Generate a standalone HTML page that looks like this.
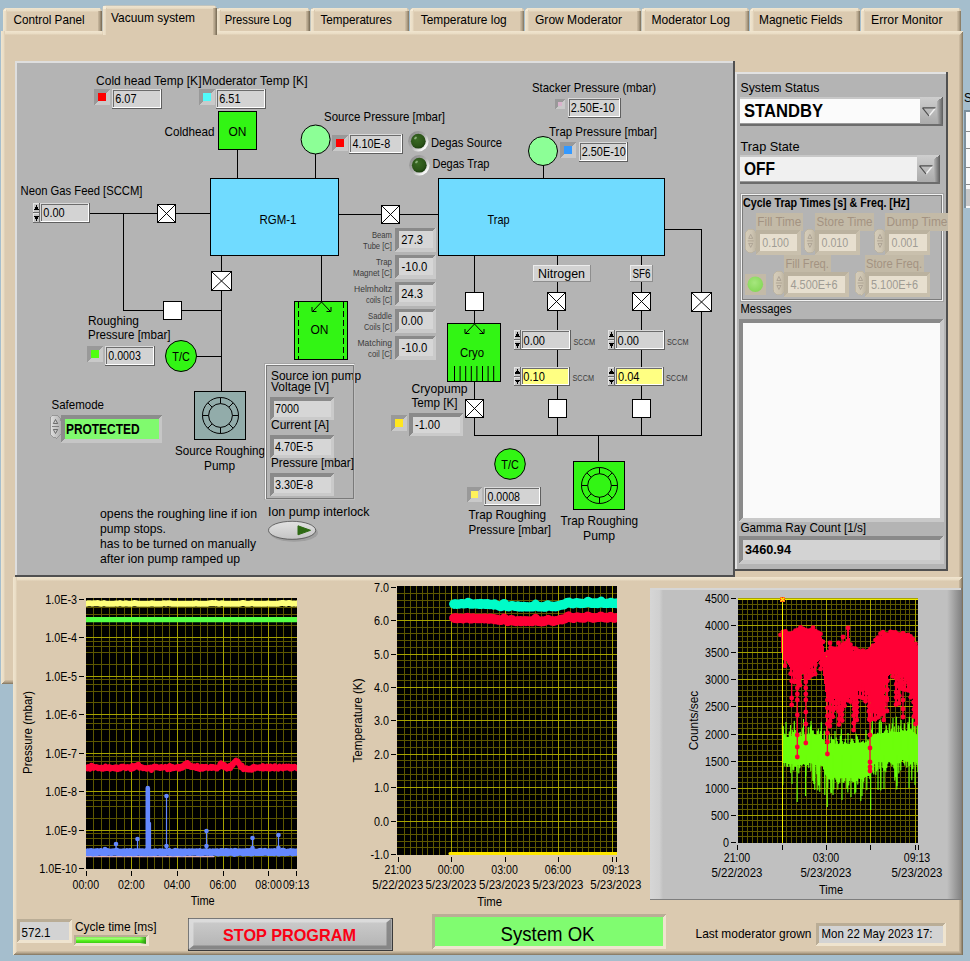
<!DOCTYPE html>
<html lang="en"><head><meta charset="utf-8"><title>Vacuum system</title>
<style>
html,body{margin:0;padding:0;background:#a5becd;}
body{width:970px;height:961px;overflow:hidden;}
#panel{position:absolute;left:0;top:0;width:970px;height:961px;display:block;font-family:"Liberation Sans",sans-serif;font-size:13px;}
#panel rect,#panel polygon{shape-rendering:crispEdges;}
</style></head><body>
<svg id="panel" width="970" height="961" viewBox="0 0 970 961">
<defs>
<linearGradient id="hlT" x1="0" y1="0" x2="0" y2="1"><stop offset="0" stop-color="#f0e5cf"/><stop offset=".7" stop-color="#e9dcc4"/><stop offset="1" stop-color="#dbcab0"/></linearGradient>
<linearGradient id="hlL" x1="0" y1="0" x2="1" y2="0"><stop offset="0" stop-color="#f0e5cf"/><stop offset=".7" stop-color="#e9dcc4"/><stop offset="1" stop-color="#dbcab0"/></linearGradient>
<linearGradient id="shR" x1="0" y1="0" x2="1" y2="0"><stop offset="0" stop-color="#d2c1a7"/><stop offset=".5" stop-color="#b3a38a"/><stop offset="1" stop-color="#80735d"/></linearGradient>
<linearGradient id="shB" x1="0" y1="0" x2="0" y2="1"><stop offset="0" stop-color="#d2c1a7"/><stop offset=".5" stop-color="#b3a38a"/><stop offset="1" stop-color="#80735d"/></linearGradient>
<linearGradient id="bez" x1="0" y1="0" x2="1" y2="1"><stop offset="0.1" stop-color="#8c8c8c"/><stop offset=".5" stop-color="#b0b0b0"/><stop offset=".85" stop-color="#ffffff"/></linearGradient>
<radialGradient id="dkg" cx=".42" cy=".38" r=".65"><stop offset="0" stop-color="#3a6a24"/><stop offset=".7" stop-color="#2c5519"/><stop offset="1" stop-color="#1a3a0e"/></radialGradient>
<radialGradient id="dled" cx=".45" cy=".4" r=".6"><stop offset="0" stop-color="#a6e67e"/><stop offset="1" stop-color="#86d858"/></radialGradient>
<linearGradient id="dspin" x1="0" y1="0" x2="1" y2="0"><stop offset="0" stop-color="#d6cdba"/><stop offset=".6" stop-color="#cec5b2"/><stop offset="1" stop-color="#bdb4a1"/></linearGradient>
<linearGradient id="ovl" x1="0" y1="0" x2="1" y2="0"><stop offset="0" stop-color="#e2e2e2"/><stop offset="1" stop-color="#b0b0b0"/></linearGradient>
<linearGradient id="tog" x1="0" y1="0" x2="0" y2="1"><stop offset="0" stop-color="#e2e2e2"/><stop offset="1" stop-color="#c4c4c4"/></linearGradient>
<linearGradient id="btn" x1="0" y1="0" x2="0" y2="1"><stop offset="0" stop-color="#cfcfcf"/><stop offset="1" stop-color="#ababab"/></linearGradient>
<linearGradient id="btnr" x1="0" y1="0" x2="1" y2="0"><stop offset="0" stop-color="#b4b4b4"/><stop offset="1" stop-color="#5c5c5c"/></linearGradient>
<linearGradient id="stopb" x1="0" y1="0" x2="0" y2="1"><stop offset="0" stop-color="#cdcdcd"/><stop offset="1" stop-color="#b2b2b2"/></linearGradient>
<linearGradient id="prog" x1="0" y1="0" x2="0" y2="1"><stop offset="0" stop-color="#7af04a"/><stop offset=".3" stop-color="#a4ff7c"/><stop offset=".6" stop-color="#56f01a"/><stop offset="1" stop-color="#3ccc14"/></linearGradient>
<linearGradient id="proge" x1="0" y1="0" x2="1" y2="0"><stop offset="0" stop-color="#2fa010" stop-opacity="0"/><stop offset="1" stop-color="#2a9010" stop-opacity=".9"/></linearGradient>
<linearGradient id="c3f" x1="0" y1="0" x2="1" y2="0"><stop offset="0" stop-color="#d6d6d6"/><stop offset=".03" stop-color="#d0d0d0"/><stop offset=".042" stop-color="#c0c0c0"/><stop offset=".955" stop-color="#c0c0c0"/><stop offset="1" stop-color="#848484"/></linearGradient>
<clipPath id="c1"><rect x="86" y="598" width="211" height="271"/></clipPath>
<clipPath id="c2"><rect x="397" y="586" width="220" height="269"/></clipPath>
<clipPath id="c3"><rect x="738" y="598" width="180" height="245"/></clipPath>
</defs>
<rect x="0" y="0" width="970" height="961" fill="#a5becd"/>
<path d="M3 32V11Q3 8 6 8H98.5Q101.5 8 101.5 11V32Z" fill="#dbcab0"/>
<rect x="5" y="8" width="94.5" height="4" fill="url(#hlT)"/>
<rect x="3" y="10" width="4" height="22" fill="url(#hlL)"/>
<rect x="97.5" y="10.5" width="4" height="21.5" fill="url(#shR)"/>
<rect x="3.5" y="8.5" width="3" height="3" fill="#f6ecd8" rx="1.5"/>
<text x="13.6" y="24" textLength="71" lengthAdjust="spacingAndGlyphs">Control Panel</text>
<path d="M216.5 32V11Q216.5 8 219.5 8H306.5Q309.5 8 309.5 11V32Z" fill="#dbcab0"/>
<rect x="218.5" y="8" width="89" height="4" fill="url(#hlT)"/>
<rect x="216.5" y="10" width="4" height="22" fill="url(#hlL)"/>
<rect x="305.5" y="10.5" width="4" height="21.5" fill="url(#shR)"/>
<rect x="217" y="8.5" width="3" height="3" fill="#f6ecd8" rx="1.5"/>
<text x="224.8" y="24" textLength="66.8" lengthAdjust="spacingAndGlyphs">Pressure Log</text>
<path d="M310.5 32V11Q310.5 8 313.5 8H406Q409 8 409 11V32Z" fill="#dbcab0"/>
<rect x="312.5" y="8" width="94.5" height="4" fill="url(#hlT)"/>
<rect x="310.5" y="10" width="4" height="22" fill="url(#hlL)"/>
<rect x="405" y="10.5" width="4" height="21.5" fill="url(#shR)"/>
<rect x="311" y="8.5" width="3" height="3" fill="#f6ecd8" rx="1.5"/>
<text x="320.5" y="24" textLength="71.3" lengthAdjust="spacingAndGlyphs">Temperatures</text>
<path d="M410 32V11Q410 8 413 8H521Q524 8 524 11V32Z" fill="#dbcab0"/>
<rect x="412" y="8" width="110" height="4" fill="url(#hlT)"/>
<rect x="410" y="10" width="4" height="22" fill="url(#hlL)"/>
<rect x="520" y="10.5" width="4" height="21.5" fill="url(#shR)"/>
<rect x="410.5" y="8.5" width="3" height="3" fill="#f6ecd8" rx="1.5"/>
<text x="420.7" y="24" textLength="86" lengthAdjust="spacingAndGlyphs">Temperature log</text>
<path d="M525 32V11Q525 8 528 8H637.8Q640.8 8 640.8 11V32Z" fill="#dbcab0"/>
<rect x="527" y="8" width="111.8" height="4" fill="url(#hlT)"/>
<rect x="525" y="10" width="4" height="22" fill="url(#hlL)"/>
<rect x="636.8" y="10.5" width="4" height="21.5" fill="url(#shR)"/>
<rect x="525.5" y="8.5" width="3" height="3" fill="#f6ecd8" rx="1.5"/>
<text x="535" y="24" textLength="87" lengthAdjust="spacingAndGlyphs">Grow Moderator</text>
<path d="M641.5 32V11Q641.5 8 644.5 8H746Q749 8 749 11V32Z" fill="#dbcab0"/>
<rect x="643.5" y="8" width="103.5" height="4" fill="url(#hlT)"/>
<rect x="641.5" y="10" width="4" height="22" fill="url(#hlL)"/>
<rect x="745" y="10.5" width="4" height="21.5" fill="url(#shR)"/>
<rect x="642" y="8.5" width="3" height="3" fill="#f6ecd8" rx="1.5"/>
<text x="651.5" y="24" textLength="78.5" lengthAdjust="spacingAndGlyphs">Moderator Log</text>
<path d="M750 32V11Q750 8 753 8H857Q860 8 860 11V32Z" fill="#dbcab0"/>
<rect x="752" y="8" width="106" height="4" fill="url(#hlT)"/>
<rect x="750" y="10" width="4" height="22" fill="url(#hlL)"/>
<rect x="856" y="10.5" width="4" height="21.5" fill="url(#shR)"/>
<rect x="750.5" y="8.5" width="3" height="3" fill="#f6ecd8" rx="1.5"/>
<text x="759" y="24" textLength="83.5" lengthAdjust="spacingAndGlyphs">Magnetic Fields</text>
<path d="M861 32V11Q861 8 864 8H958Q961 8 961 11V32Z" fill="#dbcab0"/>
<rect x="863" y="8" width="96" height="4" fill="url(#hlT)"/>
<rect x="861" y="10" width="4" height="22" fill="url(#hlL)"/>
<rect x="957" y="10.5" width="4" height="21.5" fill="url(#shR)"/>
<rect x="861.5" y="8.5" width="3" height="3" fill="#f6ecd8" rx="1.5"/>
<text x="871" y="24" textLength="71.5" lengthAdjust="spacingAndGlyphs">Error Monitor</text>
<rect x="1" y="31" width="962" height="653" fill="#dbcab0"/>
<rect x="1" y="31" width="962" height="4" fill="url(#hlT)"/>
<rect x="1" y="31" width="4" height="653" fill="url(#hlL)"/>
<polygon points="959,35 963,31 963,684 959,680" fill="url(#shR)"/>
<polygon points="5,680 959,680 963,684 1,684" fill="url(#shB)"/>
<path d="M102.5 35V8.5Q102.5 5.5 105.5 5.5H213.5Q216.5 5.5 216.5 8.5V35Z" fill="#dbcab0"/>
<rect x="104.5" y="5.5" width="110" height="4" fill="url(#hlT)"/>
<rect x="102.5" y="7.5" width="4" height="27.5" fill="url(#hlL)"/>
<rect x="212.5" y="8" width="4" height="27" fill="url(#shR)"/>
<rect x="103" y="6" width="3" height="3" fill="#f6ecd8" rx="1.5"/>
<text x="111" y="22" textLength="84" lengthAdjust="spacingAndGlyphs">Vacuum system</text>
<rect x="106.5" y="31" width="106" height="4.5" fill="#dbcab0"/>
<rect x="13" y="577" width="949.5" height="378" fill="#dbcab0"/>
<rect x="13" y="577" width="949.5" height="4" fill="url(#hlT)"/>
<rect x="13" y="577" width="4" height="378" fill="url(#hlL)"/>
<polygon points="958.5,581 962.5,577 962.5,955 958.5,951" fill="url(#shR)"/>
<polygon points="17,951 958.5,951 962.5,955 13,955" fill="url(#shB)"/>
<rect x="15" y="61" width="720" height="516" fill="#505050"/>
<rect x="15" y="61" width="718" height="514" fill="#dedede"/>
<rect x="17" y="63" width="716" height="512" fill="#b4b4b4"/>
<rect x="735" y="72" width="213" height="499" fill="#505050"/>
<rect x="735" y="72" width="211" height="497" fill="#e2e2e2"/>
<rect x="737" y="74" width="209" height="495" fill="#b4b4b4"/>
<text x="964" y="102" textLength="8" lengthAdjust="spacingAndGlyphs">S</text>
<rect x="964" y="110" width="6" height="98" fill="#7d909c"/>
<rect x="966" y="112" width="4" height="96" fill="#fafafa"/>
<rect x="966" y="131" width="4" height="1" fill="#8a8a8a"/>
<rect x="966" y="148" width="4" height="1" fill="#8a8a8a"/>
<rect x="966" y="167" width="4" height="1" fill="#8a8a8a"/>
<rect x="966" y="184" width="4" height="1" fill="#8a8a8a"/>
<rect x="966" y="189" width="4" height="17" fill="#c8c8c8"/>
<rect x="90" y="213" width="67" height="1" fill="#000"/>
<rect x="176" y="213" width="34" height="1" fill="#000"/>
<rect x="123" y="213" width="1" height="98" fill="#000"/>
<rect x="123" y="310" width="40" height="1" fill="#000"/>
<rect x="182" y="310" width="40" height="1" fill="#000"/>
<rect x="237" y="150" width="1" height="28" fill="#000"/>
<rect x="315" y="154" width="1" height="24" fill="#000"/>
<rect x="339" y="214" width="42" height="1" fill="#000"/>
<rect x="400" y="214" width="38" height="1" fill="#000"/>
<rect x="221" y="256" width="1" height="15" fill="#000"/>
<rect x="221" y="290" width="1" height="101" fill="#000"/>
<rect x="196" y="356" width="26" height="1" fill="#000"/>
<rect x="321" y="256" width="1" height="45" fill="#000"/>
<rect x="543" y="165" width="1" height="13" fill="#000"/>
<rect x="474" y="256" width="1" height="36" fill="#000"/>
<rect x="474" y="311" width="1" height="12" fill="#000"/>
<rect x="474" y="382" width="1" height="17" fill="#000"/>
<rect x="474" y="418" width="1" height="18" fill="#000"/>
<rect x="474" y="435" width="228" height="1" fill="#000"/>
<rect x="557" y="256" width="1" height="180" fill="#000"/>
<rect x="641" y="256" width="1" height="180" fill="#000"/>
<rect x="665" y="229" width="37" height="1" fill="#000"/>
<rect x="701" y="229" width="1" height="207" fill="#000"/>
<rect x="598" y="435" width="1" height="26" fill="#000"/>
<text x="96" y="85" textLength="105.5" lengthAdjust="spacingAndGlyphs">Cold head Temp [K]</text>
<polygon points="94,89 110,89 106,93 98,93 98,101 94,105" fill="#999999"/>
<polygon points="110,105 94,105 98,101 106,101 106,93 110,89" fill="#c9c9c9"/>
<rect x="98" y="93" width="8" height="8" fill="#ff0000"/>
<rect x="112" y="89" width="50" height="20" fill="#5f5f5f"/>
<rect x="112" y="89" width="49" height="19" fill="#dadada"/>
<rect x="113" y="90" width="48" height="18" fill="#ffffff"/>
<rect x="113" y="90" width="47" height="17" fill="#6c6c6c"/>
<rect x="114" y="91" width="46" height="16" fill="#d3d3d3"/>
<text x="115.2" y="103" textLength="21.3" lengthAdjust="spacingAndGlyphs">6.07</text>
<text x="202" y="85" textLength="105.5" lengthAdjust="spacingAndGlyphs">Moderator Temp [K]</text>
<polygon points="199,89 215,89 211,93 203,93 203,101 199,105" fill="#999999"/>
<polygon points="215,105 199,105 203,101 211,101 211,93 215,89" fill="#c9c9c9"/>
<rect x="203" y="93" width="8" height="8" fill="#50fafa"/>
<rect x="216" y="89" width="50" height="20" fill="#5f5f5f"/>
<rect x="216" y="89" width="49" height="19" fill="#dadada"/>
<rect x="217" y="90" width="48" height="18" fill="#ffffff"/>
<rect x="217" y="90" width="47" height="17" fill="#6c6c6c"/>
<rect x="218" y="91" width="46" height="16" fill="#d3d3d3"/>
<text x="219.2" y="103" textLength="21.3" lengthAdjust="spacingAndGlyphs">6.51</text>
<text x="164.5" y="136" textLength="50" lengthAdjust="spacingAndGlyphs">Coldhead</text>
<rect x="218" y="111" width="39" height="39" fill="#000"/>
<rect x="219" y="112" width="37" height="37" fill="#32f514"/>
<text x="237.5" y="136" textLength="18" lengthAdjust="spacingAndGlyphs" text-anchor="middle">ON</text>
<rect x="210" y="178" width="129" height="78" fill="#000"/>
<rect x="211" y="179" width="127" height="76" fill="#70dbff"/>
<text x="278" y="224" textLength="37" lengthAdjust="spacingAndGlyphs" text-anchor="middle">RGM-1</text>
<circle cx="315.6" cy="139.5" r="14.5" fill="#8cff96" stroke="#000"/>
<text x="324" y="121" textLength="121" lengthAdjust="spacingAndGlyphs">Source Pressure [mbar]</text>
<polygon points="332,135 348,135 344,139 336,139 336,147 332,151" fill="#999999"/>
<polygon points="348,151 332,151 336,147 344,147 344,139 348,135" fill="#c9c9c9"/>
<rect x="336" y="139" width="8" height="8" fill="#ff0000"/>
<rect x="349" y="134" width="54" height="20" fill="#5f5f5f"/>
<rect x="349" y="134" width="53" height="19" fill="#dadada"/>
<rect x="350" y="135" width="52" height="18" fill="#ffffff"/>
<rect x="350" y="135" width="51" height="17" fill="#6c6c6c"/>
<rect x="351" y="136" width="50" height="16" fill="#d3d3d3"/>
<text x="352.5" y="148" textLength="37.7" lengthAdjust="spacingAndGlyphs">4.10E-8</text>
<circle cx="418.3" cy="141.2" r="10.2" fill="url(#bez)"/>
<circle cx="418.3" cy="141.2" r="7.4" fill="url(#dkg)"/>
<ellipse cx="415.5" cy="138" rx="1.6" ry="1.1" fill="#9cc08c" opacity=".8" transform="rotate(-40 415.5 138)"/>
<circle cx="419.3" cy="165.2" r="10.2" fill="url(#bez)"/>
<circle cx="419.3" cy="165.2" r="7.4" fill="url(#dkg)"/>
<ellipse cx="416.5" cy="162" rx="1.6" ry="1.1" fill="#9cc08c" opacity=".8" transform="rotate(-40 416.5 162)"/>
<text x="431" y="147" textLength="71" lengthAdjust="spacingAndGlyphs">Degas Source</text>
<text x="432.5" y="168" textLength="57" lengthAdjust="spacingAndGlyphs">Degas Trap</text>
<text x="20.5" y="195" textLength="122" lengthAdjust="spacingAndGlyphs">Neon Gas Feed [SCCM]</text>
<rect x="33" y="203" width="7" height="10" fill="#6a6a6a"/>
<rect x="33" y="203" width="6" height="9" fill="#e4e4e4"/>
<rect x="34" y="204" width="5" height="8" fill="#c4c4c4"/>
<rect x="33" y="213" width="7" height="10" fill="#6a6a6a"/>
<rect x="33" y="213" width="6" height="9" fill="#e4e4e4"/>
<rect x="34" y="214" width="5" height="8" fill="#c4c4c4"/>
<polygon points="36.5,205 39.1,210 33.9,210" fill="#000"/>
<polygon points="36.5,221 39.1,216 33.9,216" fill="#000"/>
<rect x="40" y="203" width="50" height="20" fill="#5f5f5f"/>
<rect x="40" y="203" width="49" height="19" fill="#dadada"/>
<rect x="41" y="204" width="48" height="18" fill="#ffffff"/>
<rect x="41" y="204" width="47" height="17" fill="#6c6c6c"/>
<rect x="42" y="205" width="46" height="16" fill="#d3d3d3"/>
<text x="43.3" y="217" textLength="21.3" lengthAdjust="spacingAndGlyphs">0.00</text>
<rect x="157" y="204" width="19" height="19" fill="#000"/>
<rect x="158" y="205" width="17" height="17" fill="#fff"/>
<path d="M158 205L175 222M175 205L158 222" stroke="#000" stroke-width="0.95" fill="none"/>
<rect x="381" y="205" width="19" height="19" fill="#000"/>
<rect x="382" y="206" width="17" height="17" fill="#fff"/>
<path d="M382 206L399 223M399 206L382 223" stroke="#000" stroke-width="0.95" fill="none"/>
<rect x="211" y="271" width="21" height="20" fill="#000"/>
<rect x="212" y="272" width="19" height="18" fill="#fff"/>
<path d="M212 272L231 290M231 272L212 290" stroke="#000" stroke-width="0.95" fill="none"/>
<rect x="163" y="301" width="19" height="19" fill="#000"/>
<rect x="164" y="302" width="17" height="17" fill="#fff"/>
<text x="88" y="324.5" textLength="51" lengthAdjust="spacingAndGlyphs">Roughing</text>
<text x="88" y="339" textLength="82.5" lengthAdjust="spacingAndGlyphs">Pressure [mbar]</text>
<polygon points="87,346 103,346 99,350 91,350 91,358 87,362" fill="#999999"/>
<polygon points="103,362 87,362 91,358 99,358 99,350 103,346" fill="#c9c9c9"/>
<rect x="91" y="350" width="8" height="8" fill="#50ff10"/>
<rect x="105" y="346" width="50" height="20" fill="#5f5f5f"/>
<rect x="105" y="346" width="49" height="19" fill="#dadada"/>
<rect x="106" y="347" width="48" height="18" fill="#ffffff"/>
<rect x="106" y="347" width="47" height="17" fill="#6c6c6c"/>
<rect x="107" y="348" width="46" height="16" fill="#d3d3d3"/>
<text x="108.3" y="360" textLength="32.5" lengthAdjust="spacingAndGlyphs">0.0003</text>
<circle cx="181" cy="356" r="15.5" fill="#32f514" stroke="#000"/>
<text x="181" y="360.8" textLength="17.5" lengthAdjust="spacingAndGlyphs" text-anchor="middle">T/C</text>
<rect x="194" y="391" width="52" height="49" fill="#000"/>
<rect x="195" y="392" width="50" height="47" fill="#92acaa"/>
<g stroke="#000" stroke-width="1" fill="none">
<circle cx="220.5" cy="415.5" r="18"/><circle cx="220.5" cy="415.5" r="11.9"/>
<path d="M232.4 415.5L238.5 415.5M228.91 423.91L233.23 428.23M220.5 427.4L220.5 433.5M212.09 423.91L207.77 428.23M208.6 415.5L202.5 415.5M212.09 407.09L207.77 402.77M220.5 403.6L220.5 397.5M228.91 407.09L233.23 402.77"/>
</g>
<text x="175" y="455" textLength="90" lengthAdjust="spacingAndGlyphs">Source Roughing</text>
<text x="204" y="469.5" textLength="31" lengthAdjust="spacingAndGlyphs">Pump</text>
<text x="51.5" y="408.5" textLength="52.5" lengthAdjust="spacingAndGlyphs">Safemode</text>
<rect x="50" y="415" width="11" height="23" rx="5.5" fill="url(#ovl)" stroke="#8a8a8a" stroke-width="0.8"/>
<path d="M52 426.5h7" stroke="#808080" stroke-width="1"/>
<path d="M53.3 423.5l2.2-4 2.2 4zM53.3 429.5l2.2 4 2.2-4z" fill="none" stroke="#555" stroke-width="0.8"/>
<polygon points="61,415 162,415 158.5,418.5 64.5,418.5 64.5,439 61,442.5" fill="#8c8c8c"/>
<polygon points="162,442.5 61,442.5 64.5,439 158.5,439 158.5,418.5 162,415" fill="#c6c6c6"/>
<rect x="64.5" y="418.5" width="94" height="20.5" fill="#80fa6e"/>
<text x="66" y="433.5" textLength="73.5" lengthAdjust="spacingAndGlyphs" font-weight="bold" font-size="14">PROTECTED</text>
<text x="100" y="517.5" textLength="157" lengthAdjust="spacingAndGlyphs">opens the roughing line if ion</text>
<text x="100" y="532.5" textLength="66" lengthAdjust="spacingAndGlyphs">pump stops.</text>
<text x="100" y="548" textLength="156" lengthAdjust="spacingAndGlyphs">has to be turned on manually</text>
<text x="100" y="562.5" textLength="140" lengthAdjust="spacingAndGlyphs">after ion pump ramped up</text>
<rect x="294" y="301" width="54" height="59" fill="#000"/>
<rect x="295" y="302" width="52" height="57" fill="#32f514"/>
<path d="M298.5 302V359M343.5 302V359" stroke="#000" stroke-width="1" stroke-dasharray="6 3" fill="none"/>
<path d="M321.5 302L312.5 311.5M321.5 302L330.5 311.5M312 311.5h4.5M312 311.5v-4.5M331 311.5h-4.5M331 311.5v-4.5" stroke="#000" stroke-width="1" fill="none"/>
<text x="319.5" y="333.5" textLength="18" lengthAdjust="spacingAndGlyphs" text-anchor="middle">ON</text>
<text x="271" y="379.5" textLength="90" lengthAdjust="spacingAndGlyphs">Source ion pump</text>
<rect x="265" y="364" width="89" height="135" fill="none" stroke="#f4f4f4" stroke-width="1"/>
<rect x="266" y="365" width="87" height="133" fill="none" stroke="#7a7a7a" stroke-width="1"/>
<rect x="264.5" y="363.5" width="90" height="136" fill="none" stroke="#9a9a9a" stroke-width="0.6"/>
<text x="271" y="391" textLength="58" lengthAdjust="spacingAndGlyphs">Voltage [V]</text>
<polygon points="270,397 334,397 330.5,400.5 273.5,400.5 273.5,416.5 270,420" fill="#8a8a8a"/>
<polygon points="334,420 270,420 273.5,416.5 330.5,416.5 330.5,400.5 334,397" fill="#cacaca"/>
<rect x="273.5" y="400.5" width="57" height="16" fill="#d6d6d6"/>
<text x="275" y="413" textLength="24" lengthAdjust="spacingAndGlyphs">7000</text>
<text x="271" y="429" textLength="58" lengthAdjust="spacingAndGlyphs">Current [A]</text>
<polygon points="270,435 334,435 330.5,438.5 273.5,438.5 273.5,454.5 270,458" fill="#8a8a8a"/>
<polygon points="334,458 270,458 273.5,454.5 330.5,454.5 330.5,438.5 334,435" fill="#cacaca"/>
<rect x="273.5" y="438.5" width="57" height="16" fill="#d6d6d6"/>
<text x="275" y="451" textLength="38" lengthAdjust="spacingAndGlyphs">4.70E-5</text>
<text x="271" y="467" textLength="83" lengthAdjust="spacingAndGlyphs">Pressure [mbar]</text>
<polygon points="270,473 334,473 330.5,476.5 273.5,476.5 273.5,492.5 270,496" fill="#8a8a8a"/>
<polygon points="334,496 270,496 273.5,492.5 330.5,492.5 330.5,476.5 334,473" fill="#cacaca"/>
<rect x="273.5" y="476.5" width="57" height="16" fill="#d6d6d6"/>
<text x="275" y="489" textLength="38" lengthAdjust="spacingAndGlyphs">3.30E-8</text>
<text x="268" y="516" textLength="101.5" lengthAdjust="spacingAndGlyphs">Ion pump interlock</text>
<ellipse cx="294" cy="532.8" rx="24" ry="9" fill="#8e8e8e" opacity=".55"/>
<ellipse cx="292.1" cy="530.3" rx="23.6" ry="9" fill="url(#tog)" stroke="#3c3c3c" stroke-width="0.7"/>
<path d="M298 525.8L310.5 530.3L298 534.8Z" fill="#2e6a14" stroke="#2e6a14" stroke-width="1" stroke-linejoin="round"/>
<text x="392" y="238" textLength="20" lengthAdjust="spacingAndGlyphs" text-anchor="end" font-size="9" fill="#3c3c3c">Beam</text>
<text x="392" y="249" textLength="29" lengthAdjust="spacingAndGlyphs" text-anchor="end" font-size="9" fill="#3c3c3c">Tube [C]</text>
<polygon points="395,227.5 436,227.5 432.5,231 398.5,231 398.5,248 395,251.5" fill="#8a8a8a"/>
<polygon points="436,251.5 395,251.5 398.5,248 432.5,248 432.5,231 436,227.5" fill="#cacaca"/>
<rect x="398.5" y="231" width="34" height="17" fill="#d6d6d6"/>
<text x="401.3" y="244" textLength="21.6" lengthAdjust="spacingAndGlyphs">27.3</text>
<text x="392" y="265" textLength="16" lengthAdjust="spacingAndGlyphs" text-anchor="end" font-size="9" fill="#3c3c3c">Trap</text>
<text x="392" y="276" textLength="39" lengthAdjust="spacingAndGlyphs" text-anchor="end" font-size="9" fill="#3c3c3c">Magnet [C]</text>
<polygon points="395,254.5 436,254.5 432.5,258 398.5,258 398.5,275 395,278.5" fill="#8a8a8a"/>
<polygon points="436,278.5 395,278.5 398.5,275 432.5,275 432.5,258 436,254.5" fill="#cacaca"/>
<rect x="398.5" y="258" width="34" height="17" fill="#d6d6d6"/>
<text x="401.6" y="271" textLength="25.8" lengthAdjust="spacingAndGlyphs">-10.0</text>
<text x="392" y="292" textLength="38" lengthAdjust="spacingAndGlyphs" text-anchor="end" font-size="9" fill="#3c3c3c">Helmholtz</text>
<text x="392" y="303" textLength="26" lengthAdjust="spacingAndGlyphs" text-anchor="end" font-size="9" fill="#3c3c3c">coils [C]</text>
<polygon points="395,281.5 436,281.5 432.5,285 398.5,285 398.5,302 395,305.5" fill="#8a8a8a"/>
<polygon points="436,305.5 395,305.5 398.5,302 432.5,302 432.5,285 436,281.5" fill="#cacaca"/>
<rect x="398.5" y="285" width="34" height="17" fill="#d6d6d6"/>
<text x="401.3" y="298" textLength="21.6" lengthAdjust="spacingAndGlyphs">24.3</text>
<text x="392" y="319" textLength="24" lengthAdjust="spacingAndGlyphs" text-anchor="end" font-size="9" fill="#3c3c3c">Saddle</text>
<text x="392" y="330" textLength="28" lengthAdjust="spacingAndGlyphs" text-anchor="end" font-size="9" fill="#3c3c3c">Coils [C]</text>
<polygon points="395,308.5 436,308.5 432.5,312 398.5,312 398.5,329 395,332.5" fill="#8a8a8a"/>
<polygon points="436,332.5 395,332.5 398.5,329 432.5,329 432.5,312 436,308.5" fill="#cacaca"/>
<rect x="398.5" y="312" width="34" height="17" fill="#d6d6d6"/>
<text x="401.3" y="325" textLength="21.6" lengthAdjust="spacingAndGlyphs">0.00</text>
<text x="392" y="346" textLength="34.5" lengthAdjust="spacingAndGlyphs" text-anchor="end" font-size="9" fill="#3c3c3c">Matching</text>
<text x="392" y="357" textLength="24" lengthAdjust="spacingAndGlyphs" text-anchor="end" font-size="9" fill="#3c3c3c">coil [C]</text>
<polygon points="395,335.5 436,335.5 432.5,339 398.5,339 398.5,356 395,359.5" fill="#8a8a8a"/>
<polygon points="436,359.5 395,359.5 398.5,356 432.5,356 432.5,339 436,335.5" fill="#cacaca"/>
<rect x="398.5" y="339" width="34" height="17" fill="#d6d6d6"/>
<text x="401.6" y="352" textLength="25.8" lengthAdjust="spacingAndGlyphs">-10.0</text>
<rect x="438" y="178" width="227" height="78" fill="#000"/>
<rect x="439" y="179" width="225" height="76" fill="#70dbff"/>
<text x="487.5" y="224" textLength="22" lengthAdjust="spacingAndGlyphs">Trap</text>
<text x="532" y="92" textLength="124" lengthAdjust="spacingAndGlyphs">Stacker Pressure (mbar)</text>
<polygon points="555,99 565,99 562,102 558,102 558,106 555,109" fill="#999999"/>
<polygon points="565,109 555,109 558,106 562,106 562,102 565,99" fill="#c9c9c9"/>
<rect x="558" y="102" width="4" height="4" fill="#d9b3cc"/>
<rect x="568" y="98" width="53" height="20" fill="#5f5f5f"/>
<rect x="568" y="98" width="52" height="19" fill="#dadada"/>
<rect x="569" y="99" width="51" height="18" fill="#ffffff"/>
<rect x="569" y="99" width="50" height="17" fill="#6c6c6c"/>
<rect x="570" y="100" width="49" height="16" fill="#d3d3d3"/>
<text x="570.8" y="112" textLength="44" lengthAdjust="spacingAndGlyphs">2.50E-10</text>
<text x="549" y="136" textLength="108" lengthAdjust="spacingAndGlyphs">Trap Pressure [mbar]</text>
<circle cx="543" cy="151" r="14.5" fill="#8cff96" stroke="#000"/>
<polygon points="560,142 576,142 572,146 564,146 564,154 560,158" fill="#999999"/>
<polygon points="576,158 560,158 564,154 572,154 572,146 576,142" fill="#c9c9c9"/>
<rect x="564" y="146" width="8" height="8" fill="#3399ff"/>
<rect x="579" y="142" width="49" height="20" fill="#5f5f5f"/>
<rect x="579" y="142" width="48" height="19" fill="#dadada"/>
<rect x="580" y="143" width="47" height="18" fill="#ffffff"/>
<rect x="580" y="143" width="46" height="17" fill="#6c6c6c"/>
<rect x="581" y="144" width="45" height="16" fill="#d3d3d3"/>
<text x="581.8" y="156" textLength="44" lengthAdjust="spacingAndGlyphs">2.50E-10</text>
<rect x="465" y="292" width="19" height="19" fill="#000"/>
<rect x="466" y="293" width="17" height="17" fill="#fff"/>
<rect x="447" y="323" width="54" height="59" fill="#000"/>
<rect x="448" y="324" width="52" height="57" fill="#32f514"/>
<path d="M474.5 324L465.5 333.5M474.5 324L483.5 333.5M465 333.5h4.5M465 333.5v-4.5M484 333.5h-4.5M484 333.5v-4.5" stroke="#000" stroke-width="1" fill="none"/>
<text x="472" y="357" textLength="24" lengthAdjust="spacingAndGlyphs" text-anchor="middle">Cryo</text>
<path d="M454.5 366V381M460.1 366V381M465.7 366V381M471.3 366V381M476.9 366V381M482.5 366V381M488.1 366V381M493.7 366V381" stroke="#000" stroke-width="1" fill="none"/>
<text x="411.5" y="392.5" textLength="56" lengthAdjust="spacingAndGlyphs">Cryopump</text>
<text x="411.5" y="407" textLength="46" lengthAdjust="spacingAndGlyphs">Temp [K]</text>
<rect x="465" y="399" width="19" height="19" fill="#000"/>
<rect x="466" y="400" width="17" height="17" fill="#fff"/>
<path d="M466 400L483 417M483 400L466 417" stroke="#000" stroke-width="0.95" fill="none"/>
<polygon points="391,415 407,415 403,419 395,419 395,427 391,431" fill="#999999"/>
<polygon points="407,431 391,431 395,427 403,427 403,419 407,415" fill="#c9c9c9"/>
<rect x="395" y="419" width="8" height="8" fill="#ffe61e"/>
<polygon points="409,413 463,413 459.5,416.5 412.5,416.5 412.5,432.5 409,436" fill="#8a8a8a"/>
<polygon points="463,436 409,436 412.5,432.5 459.5,432.5 459.5,416.5 463,413" fill="#cacaca"/>
<rect x="412.5" y="416.5" width="47" height="16" fill="#d6d6d6"/>
<text x="415" y="428.5" textLength="25" lengthAdjust="spacingAndGlyphs">-1.00</text>
<rect x="533" y="265" width="58" height="17" fill="#8e8e8e"/>
<rect x="533" y="265" width="57" height="16" fill="#ececec"/>
<rect x="534" y="266" width="56" height="15" fill="#d2d2d2"/>
<text x="538" y="277.5" textLength="47" lengthAdjust="spacingAndGlyphs">Nitrogen</text>
<rect x="630" y="265" width="23" height="17" fill="#8e8e8e"/>
<rect x="630" y="265" width="22" height="16" fill="#ececec"/>
<rect x="631" y="266" width="21" height="15" fill="#d2d2d2"/>
<text x="632.5" y="277.5" textLength="18" lengthAdjust="spacingAndGlyphs">SF6</text>
<rect x="547" y="292" width="19" height="19" fill="#000"/>
<rect x="548" y="293" width="17" height="17" fill="#fff"/>
<path d="M548 293L565 310M565 293L548 310" stroke="#000" stroke-width="0.95" fill="none"/>
<rect x="632" y="292" width="19" height="19" fill="#000"/>
<rect x="633" y="293" width="17" height="17" fill="#fff"/>
<path d="M633 293L650 310M650 293L633 310" stroke="#000" stroke-width="0.95" fill="none"/>
<rect x="691" y="292" width="21" height="20" fill="#000"/>
<rect x="692" y="293" width="19" height="18" fill="#fff"/>
<path d="M692 293L711 311M711 293L692 311" stroke="#000" stroke-width="0.95" fill="none"/>
<rect x="514" y="330" width="7" height="10" fill="#6a6a6a"/>
<rect x="514" y="330" width="6" height="9" fill="#e4e4e4"/>
<rect x="515" y="331" width="5" height="8" fill="#c4c4c4"/>
<rect x="514" y="340" width="7" height="10" fill="#6a6a6a"/>
<rect x="514" y="340" width="6" height="9" fill="#e4e4e4"/>
<rect x="515" y="341" width="5" height="8" fill="#c4c4c4"/>
<polygon points="517.5,332 520.1,337 514.9,337" fill="#000"/>
<polygon points="517.5,348 520.1,343 514.9,343" fill="#000"/>
<rect x="521" y="330" width="50" height="20" fill="#5f5f5f"/>
<rect x="521" y="330" width="49" height="19" fill="#dadada"/>
<rect x="522" y="331" width="48" height="18" fill="#ffffff"/>
<rect x="522" y="331" width="47" height="17" fill="#6c6c6c"/>
<rect x="523" y="332" width="46" height="16" fill="#d3d3d3"/>
<text x="523.5" y="344.5" textLength="21.5" lengthAdjust="spacingAndGlyphs">0.00</text>
<text x="573.5" y="345.2" textLength="21.5" lengthAdjust="spacingAndGlyphs" font-size="9" fill="#3c3c3c">SCCM</text>
<rect x="514" y="367" width="7" height="9.5" fill="#6a6a6a"/>
<rect x="514" y="367" width="6" height="8.5" fill="#e4e4e4"/>
<rect x="515" y="368" width="5" height="7.5" fill="#c4c4c4"/>
<rect x="514" y="376.5" width="7" height="9.5" fill="#6a6a6a"/>
<rect x="514" y="376.5" width="6" height="8.5" fill="#e4e4e4"/>
<rect x="515" y="377.5" width="5" height="7.5" fill="#c4c4c4"/>
<polygon points="517.5,369 520.1,373.5 514.9,373.5" fill="#000"/>
<polygon points="517.5,384 520.1,379.5 514.9,379.5" fill="#000"/>
<rect x="521" y="367" width="49" height="19" fill="#5f5f5f"/>
<rect x="521" y="367" width="48" height="18" fill="#dadada"/>
<rect x="522" y="368" width="47" height="17" fill="#ffffff"/>
<rect x="522" y="368" width="46" height="16" fill="#6c6c6c"/>
<rect x="523" y="369" width="45" height="15" fill="#ffff82"/>
<text x="572.5" y="381.2" textLength="21.5" lengthAdjust="spacingAndGlyphs" font-size="9" fill="#3c3c3c">SCCM</text>
<rect x="608" y="330" width="7" height="10" fill="#6a6a6a"/>
<rect x="608" y="330" width="6" height="9" fill="#e4e4e4"/>
<rect x="609" y="331" width="5" height="8" fill="#c4c4c4"/>
<rect x="608" y="340" width="7" height="10" fill="#6a6a6a"/>
<rect x="608" y="340" width="6" height="9" fill="#e4e4e4"/>
<rect x="609" y="341" width="5" height="8" fill="#c4c4c4"/>
<polygon points="611.5,332 614.1,337 608.9,337" fill="#000"/>
<polygon points="611.5,348 614.1,343 608.9,343" fill="#000"/>
<rect x="615" y="330" width="50" height="20" fill="#5f5f5f"/>
<rect x="615" y="330" width="49" height="19" fill="#dadada"/>
<rect x="616" y="331" width="48" height="18" fill="#ffffff"/>
<rect x="616" y="331" width="47" height="17" fill="#6c6c6c"/>
<rect x="617" y="332" width="46" height="16" fill="#d3d3d3"/>
<text x="617.5" y="344.5" textLength="21.5" lengthAdjust="spacingAndGlyphs">0.00</text>
<text x="667" y="345.2" textLength="21.5" lengthAdjust="spacingAndGlyphs" font-size="9" fill="#3c3c3c">SCCM</text>
<rect x="608" y="367" width="7" height="9.5" fill="#6a6a6a"/>
<rect x="608" y="367" width="6" height="8.5" fill="#e4e4e4"/>
<rect x="609" y="368" width="5" height="7.5" fill="#c4c4c4"/>
<rect x="608" y="376.5" width="7" height="9.5" fill="#6a6a6a"/>
<rect x="608" y="376.5" width="6" height="8.5" fill="#e4e4e4"/>
<rect x="609" y="377.5" width="5" height="7.5" fill="#c4c4c4"/>
<polygon points="611.5,369 614.1,373.5 608.9,373.5" fill="#000"/>
<polygon points="611.5,384 614.1,379.5 608.9,379.5" fill="#000"/>
<rect x="615" y="367" width="49" height="19" fill="#5f5f5f"/>
<rect x="615" y="367" width="48" height="18" fill="#dadada"/>
<rect x="616" y="368" width="47" height="17" fill="#ffffff"/>
<rect x="616" y="368" width="46" height="16" fill="#6c6c6c"/>
<rect x="617" y="369" width="45" height="15" fill="#ffff82"/>
<text x="666" y="381.2" textLength="21.5" lengthAdjust="spacingAndGlyphs" font-size="9" fill="#3c3c3c">SCCM</text>
<text x="523.3" y="381" textLength="21.5" lengthAdjust="spacingAndGlyphs">0.10</text>
<text x="618" y="381" textLength="21.5" lengthAdjust="spacingAndGlyphs">0.04</text>
<rect x="548" y="399" width="19" height="19" fill="#000"/>
<rect x="549" y="400" width="17" height="17" fill="#fff"/>
<rect x="632" y="399" width="19" height="19" fill="#000"/>
<rect x="633" y="400" width="17" height="17" fill="#fff"/>
<circle cx="510" cy="464" r="15.3" fill="#32f514" stroke="#000"/>
<text x="510" y="468.8" textLength="17.5" lengthAdjust="spacingAndGlyphs" text-anchor="middle">T/C</text>
<polygon points="467,487 482,487 478,491 471,491 471,498 467,502" fill="#999999"/>
<polygon points="482,502 467,502 471,498 478,498 478,491 482,487" fill="#c9c9c9"/>
<rect x="471" y="491" width="7" height="7" fill="#fff25a"/>
<rect x="484" y="487" width="57" height="19" fill="#5f5f5f"/>
<rect x="484" y="487" width="56" height="18" fill="#dadada"/>
<rect x="485" y="488" width="55" height="17" fill="#ffffff"/>
<rect x="485" y="488" width="54" height="16" fill="#6c6c6c"/>
<rect x="486" y="489" width="53" height="15" fill="#d3d3d3"/>
<text x="487.5" y="500.5" textLength="32.5" lengthAdjust="spacingAndGlyphs">0.0008</text>
<text x="468.5" y="518.5" textLength="77.5" lengthAdjust="spacingAndGlyphs">Trap Roughing</text>
<text x="468.5" y="533.5" textLength="82.5" lengthAdjust="spacingAndGlyphs">Pressure [mbar]</text>
<rect x="573" y="461" width="52" height="49" fill="#000"/>
<rect x="574" y="462" width="50" height="47" fill="#32f514"/>
<g stroke="#000" stroke-width="1" fill="none">
<circle cx="599.5" cy="485.5" r="18"/><circle cx="599.5" cy="485.5" r="11.8"/>
<path d="M611.3 485.5L617.5 485.5M607.84 493.84L612.23 498.23M599.5 497.3L599.5 503.5M591.16 493.84L586.77 498.23M587.7 485.5L581.5 485.5M591.16 477.16L586.77 472.77M599.5 473.7L599.5 467.5M607.84 477.16L612.23 472.77"/>
</g>
<text x="560.5" y="525" textLength="77.5" lengthAdjust="spacingAndGlyphs">Trap Roughing</text>
<text x="583" y="539.5" textLength="32" lengthAdjust="spacingAndGlyphs">Pump</text>
<text x="740.5" y="92" textLength="79" lengthAdjust="spacingAndGlyphs">System Status</text>
<rect x="740" y="96.5" width="203" height="29" fill="#c8c8c8"/>
<rect x="740" y="123.5" width="203" height="2" fill="#6c6c6c"/>
<rect x="740" y="122.5" width="203" height="1" fill="#9a9a9a"/>
<rect x="740" y="98.5" width="180" height="24.5" fill="#fbfbfb"/>
<rect x="920" y="96.5" width="23" height="27" fill="url(#btn)"/>
<polygon points="943,96.5 943,125.5 937,123.5 937,101.5" fill="url(#btnr)"/>
<rect x="920" y="123.5" width="23" height="2" fill="#6c6c6c"/>
<path d="M935.5 108L929 116" stroke="#f2f2f2" stroke-width="1.3" fill="none"/>
<path d="M922.5 107.8H935.5M922.5 107.8L929 116" stroke="#4e4e4e" stroke-width="1.2" fill="none"/>
<text x="744" y="116.7" textLength="79" lengthAdjust="spacingAndGlyphs" font-weight="bold" font-size="17.5">STANDBY</text>
<text x="740.5" y="150.5" textLength="59" lengthAdjust="spacingAndGlyphs">Trap State</text>
<rect x="740" y="154.5" width="200" height="29" fill="#c8c8c8"/>
<rect x="740" y="181.5" width="200" height="2" fill="#6c6c6c"/>
<rect x="740" y="180.5" width="200" height="1" fill="#9a9a9a"/>
<rect x="740" y="156.5" width="177" height="24.5" fill="#f0f0f0"/>
<rect x="917" y="154.5" width="23" height="27" fill="url(#btn)"/>
<polygon points="940,154.5 940,183.5 934,181.5 934,159.5" fill="url(#btnr)"/>
<rect x="917" y="181.5" width="23" height="2" fill="#6c6c6c"/>
<path d="M932.5 166L926 174" stroke="#f2f2f2" stroke-width="1.3" fill="none"/>
<path d="M919.5 165.8H932.5M919.5 165.8L926 174" stroke="#4e4e4e" stroke-width="1.2" fill="none"/>
<text x="744" y="174.7" textLength="31" lengthAdjust="spacingAndGlyphs" font-weight="bold" font-size="17.5">OFF</text>
<rect x="741.5" y="194.5" width="201" height="106" fill="none" stroke="#f2f2f2" stroke-width="1"/>
<rect x="742.5" y="195.5" width="199" height="104" fill="none" stroke="#7c7c7c" stroke-width="1"/>
<rect x="740.5" y="193.5" width="203" height="108" fill="none" stroke="#999" stroke-width="0.7"/>
<text x="743" y="207" textLength="166.5" lengthAdjust="spacingAndGlyphs" font-weight="bold" font-size="12.5">Cycle Trap Times [s] &amp; Freq. [Hz]</text>
<rect x="756" y="213" width="47" height="18" fill="#c3baa7"/>
<text x="757.3" y="225.8" textLength="44" lengthAdjust="spacingAndGlyphs" fill="#a39382">Fill Time</text>
<rect x="815" y="213" width="58.5" height="18" fill="#c3baa7"/>
<text x="816.5" y="225.8" textLength="56" lengthAdjust="spacingAndGlyphs" fill="#a39382">Store Time</text>
<rect x="885" y="213" width="63" height="18" fill="#c3baa7"/>
<text x="886.5" y="225.8" textLength="61" lengthAdjust="spacingAndGlyphs" fill="#a39382">Dump Time</text>
<polygon points="756,230.2 800.8,230.2 797,234 759.8,234 759.8,250.8 756,254.6" fill="#bbb29f"/>
<polygon points="800.8,254.6 756,254.6 759.8,250.8 797,250.8 797,234 800.8,230.2" fill="#c9c0ad"/>
<rect x="759.8" y="234" width="37.2" height="16.8" fill="#e7dfcf"/>
<rect x="745.2" y="229" width="11" height="23.8" rx="5.5" fill="url(#dspin)" stroke="#b9b09d" stroke-width="0.7"/>
<path d="M747.7 240.9h6" stroke="#aaa08e" stroke-width="0.9"/>
<path d="M748.7 238.4l2-4 2 4zM748.7 243.4l2 4 2-4z" fill="none" stroke="#a0968a" stroke-width="0.7"/>
<text x="762.3" y="246.8" textLength="26.7" lengthAdjust="spacingAndGlyphs" fill="#9f9c94">0.100</text>
<polygon points="815.2,230.2 859.8,230.2 856,234 819,234 819,250.8 815.2,254.6" fill="#bbb29f"/>
<polygon points="859.8,254.6 815.2,254.6 819,250.8 856,250.8 856,234 859.8,230.2" fill="#c9c0ad"/>
<rect x="819" y="234" width="37" height="16.8" fill="#e7dfcf"/>
<rect x="804.4" y="229" width="11" height="23.8" rx="5.5" fill="url(#dspin)" stroke="#b9b09d" stroke-width="0.7"/>
<path d="M806.9 240.9h6" stroke="#aaa08e" stroke-width="0.9"/>
<path d="M807.9 238.4l2-4 2 4zM807.9 243.4l2 4 2-4z" fill="none" stroke="#a0968a" stroke-width="0.7"/>
<text x="821.5" y="246.8" textLength="26.7" lengthAdjust="spacingAndGlyphs" fill="#9f9c94">0.010</text>
<polygon points="885.2,230.2 930.3,230.2 926.5,234 889,234 889,250.8 885.2,254.6" fill="#bbb29f"/>
<polygon points="930.3,254.6 885.2,254.6 889,250.8 926.5,250.8 926.5,234 930.3,230.2" fill="#c9c0ad"/>
<rect x="889" y="234" width="37.5" height="16.8" fill="#e7dfcf"/>
<rect x="874.5" y="229" width="11" height="23.8" rx="5.5" fill="url(#dspin)" stroke="#b9b09d" stroke-width="0.7"/>
<path d="M877 240.9h6" stroke="#aaa08e" stroke-width="0.9"/>
<path d="M878 238.4l2-4 2 4zM878 243.4l2 4 2-4z" fill="none" stroke="#a0968a" stroke-width="0.7"/>
<text x="891.5" y="246.8" textLength="26.7" lengthAdjust="spacingAndGlyphs" fill="#9f9c94">0.001</text>
<rect x="784" y="255" width="47" height="18" fill="#c3baa7"/>
<text x="785.5" y="267.5" textLength="43.4" lengthAdjust="spacingAndGlyphs" fill="#a39382">Fill Freq.</text>
<rect x="864.5" y="255" width="59" height="18" fill="#c3baa7"/>
<text x="866" y="267.5" textLength="56" lengthAdjust="spacingAndGlyphs" fill="#a39382">Store Freq.</text>
<rect x="745.2" y="274" width="20.8" height="20.8" fill="#c3baa7"/>
<circle cx="755.3" cy="284.2" r="7.8" fill="url(#dled)"/>
<polygon points="784.2,272.2 848.8,272.2 845,276 788,276 788,293 784.2,296.8" fill="#bbb29f"/>
<polygon points="848.8,296.8 784.2,296.8 788,293 845,293 845,276 848.8,272.2" fill="#c9c0ad"/>
<rect x="788" y="276" width="57" height="17" fill="#e7dfcf"/>
<rect x="773.4" y="271" width="11" height="24" rx="5.5" fill="url(#dspin)" stroke="#b9b09d" stroke-width="0.7"/>
<path d="M775.9 283h6" stroke="#aaa08e" stroke-width="0.9"/>
<path d="M776.9 280.5l2-4 2 4zM776.9 285.5l2 4 2-4z" fill="none" stroke="#a0968a" stroke-width="0.7"/>
<text x="790.5" y="288.8" textLength="47" lengthAdjust="spacingAndGlyphs" fill="#9f9c94">4.500E+6</text>
<polygon points="864.7,272.2 930.3,272.2 926.5,276 868.5,276 868.5,293 864.7,296.8" fill="#bbb29f"/>
<polygon points="930.3,296.8 864.7,296.8 868.5,293 926.5,293 926.5,276 930.3,272.2" fill="#c9c0ad"/>
<rect x="868.5" y="276" width="58" height="17" fill="#e7dfcf"/>
<rect x="855" y="271" width="11" height="24" rx="5.5" fill="url(#dspin)" stroke="#b9b09d" stroke-width="0.7"/>
<path d="M857.5 283h6" stroke="#aaa08e" stroke-width="0.9"/>
<path d="M858.5 280.5l2-4 2 4zM858.5 285.5l2 4 2-4z" fill="none" stroke="#a0968a" stroke-width="0.7"/>
<text x="871" y="288.8" textLength="47" lengthAdjust="spacingAndGlyphs" fill="#9f9c94">5.100E+6</text>
<text x="740.5" y="313" textLength="51" lengthAdjust="spacingAndGlyphs">Messages</text>
<polygon points="738.5,319 943.5,319 939.5,323 742.5,323 742.5,517.5 738.5,521.5" fill="#8a8a8a"/>
<polygon points="943.5,521.5 738.5,521.5 742.5,517.5 939.5,517.5 939.5,323 943.5,319" fill="#c9c9c9"/>
<rect x="742.5" y="323" width="197" height="194.5" fill="#fafafa"/>
<text x="740.5" y="532" textLength="125.5" lengthAdjust="spacingAndGlyphs">Gamma Ray Count [1/s]</text>
<polygon points="738.5,536 943.5,536 939.5,540 742.5,540 742.5,559.5 738.5,563.5" fill="#8a8a8a"/>
<polygon points="943.5,563.5 738.5,563.5 742.5,559.5 939.5,559.5 939.5,540 943.5,536" fill="#c9c9c9"/>
<rect x="742.5" y="540" width="197" height="19.5" fill="#d3d3d3"/>
<text x="745" y="554" textLength="46" lengthAdjust="spacingAndGlyphs" font-weight="bold" font-size="13.5">3460.94</text>
<rect x="86" y="598" width="211" height="271" fill="#000"/>
<path d="M93.5 598V869M101.5 598V869M109.5 598V869M116.5 598V869M124.5 598V869M139.5 598V869M147.5 598V869M154.5 598V869M162.5 598V869M169.5 598V869M185.5 598V869M192.5 598V869M200.5 598V869M207.5 598V869M215.5 598V869M230.5 598V869M238.5 598V869M245.5 598V869M253.5 598V869M261.5 598V869M276.5 598V869M283.5 598V869M291.5 598V869M86 625.5H297M86 614.5H297M86 607.5H297M86 602.5H297M86 664.5H297M86 652.5H297M86 646.5H297M86 641.5H297M86 702.5H297M86 691.5H297M86 684.5H297M86 679.5H297M86 741.5H297M86 729.5H297M86 723.5H297M86 718.5H297M86 779.5H297M86 768.5H297M86 761.5H297M86 756.5H297M86 818.5H297M86 806.5H297M86 800.5H297M86 795.5H297M86 856.5H297M86 845.5H297M86 838.5H297M86 833.5H297" stroke="#5d5700" stroke-width="1" fill="none"/>
<path d="M131.5 598V869M177.5 598V869M223.5 598V869M268.5 598V869M86 637.5H297M86 676.5H297M86 714.5H297M86 753.5H297M86 791.5H297M86 830.5H297" stroke="#a6a200" stroke-width="1" fill="none"/>
<g clip-path="url(#c1)">
<polyline points="86,603.7 88,603.26 90,603.21 92,603.7 94,603.2 96,603.17 98,603.04 100,603.7 102,603.7 104,603.09 106,603.7 108,603.7 110,603.7 112,603.7 114,603.7 116,603.34 118,603.7 120,603.05 122,603.7 124,603.7 126,603.23 128,603.7 130,603.7 132,603.7 134,603.02 136,603.27 138,603.7 140,603.7 142,603.7 144,603.7 146,603.7 148,603.7 150,603.7 152,603.23 154,603.7 156,603.7 158,603.7 160,603.7 162,603.7 164,603.17 166,603.7 168,603.2 170,603.27 172,603.7 174,603.7 176,603.7 178,603.7 180,603.7 182,603.7 184,603.7 186,603.7 188,603.7 190,603.7 192,603.7 194,603.7 196,603.28 198,603.7 200,603.7 202,603.7 204,603.7 206,603.7 208,603.7 210,603.18 212,603.05 214,603.31 216,603.1 218,603.7 220,603.7 222,603.18 224,603.7 226,603.7 228,603.7 230,603.7 232,603.7 234,603.7 236,603.7 238,603.7 240,603.7 242,603.07 244,603.09 246,603.7 248,603.7 250,603.7 252,603.17 254,603.7 256,603.7 258,603.7 260,603.7 262,603.7 264,603.7 266,603.7 268,603.36 270,603.7 272,603.7 274,603.7 276,603.7 278,603.7 280,603.25 282,603.03 284,603.06 286,603.7 288,603 290,603.04 292,603.7 294,603.35 296,603.7 298,603.1" fill="none" stroke="#ffff7a" stroke-width="6" stroke-linejoin="round" stroke-linecap="round" stroke-linecap="butt"/>
<polyline points="86,619.6 297,619.6" fill="none" stroke="#54ff46" stroke-width="5.4" stroke-linejoin="round" stroke-linecap="round" stroke-linecap="butt"/>
<polyline points="86,856.6 214,856.6" fill="none" stroke="#e8b4b4" stroke-width="1.2" stroke-linejoin="round" stroke-linecap="round"/>
<polyline points="86,767.11 86.5,768.3 87,768.65 87.5,767.27 88,767.75 88.5,766.81 89,767.47 89.5,768.29 90,769 90.5,766.59 91,768.35 91.5,765.32 92,767.14 92.5,766.9 93,767.42 93.5,768.24 94,766.53 94.5,767.38 95,767.69 95.5,767.18 96,767.25 96.5,766.68 97,767.27 97.5,767.72 98,768.47 98.5,767.33 99,767.44 99.5,767.66 100,768.25 100.5,768.29 101,768.78 101.5,767.12 102,767.63 102.5,768.03 103,769.06 103.5,767.74 104,768.42 104.5,767.51 105,768.59 105.5,766.07 106,768.36 106.5,767.43 107,768.36 107.5,767.71 108,767.43 108.5,767.39 109,768.67 109.5,766.75 110,769.21 110.5,767.63 111,768.64 111.5,767.44 112,767.92 112.5,767.62 113,767.76 113.5,767.53 114,768.72 114.5,768.83 115,767.16 115.5,768.25 116,766.88 116.5,767.15 117,769.4 117.5,767.09 118,769.56 118.5,768.22 119,767.92 119.5,768.12 120,767.54 120.5,768.77 121,766.37 121.5,766.3 122,766.42 122.5,767.8 123,767.37 123.5,766.32 124,767.46 124.5,767.18 125,766.95 125.5,767.7 126,768.4 126.5,767.77 127,767.65 127.5,766.85 128,767.9 128.5,767.7 129,766.97 129.5,768.2 130,767.33 130.5,767.71 131,769.44 131.5,768.33 132,767.57 132.5,765.43 133,768.02 133.5,768.62 134,767.08 134.5,766.92 135,765.68 135.5,767.17 136,765.83 136.5,766.87 137,766.97 137.5,764.52 138,766.64 138.5,764.4 139,765.92 139.5,768.16 140,766.68 140.5,766.38 141,767.31 141.5,767.49 142,766.86 142.5,766.95 143,768.59 143.5,767.42 144,767.85 144.5,768.17 145,768.5 145.5,768.42 146,767.74 146.5,769.12 147,768.87 147.5,768.32 148,768.64 148.5,767.48 149,768.26 149.5,768.43 150,767.7 150.5,767.17 151,767.35 151.5,770.33 152,767.2 152.5,766.93 153,767.34 153.5,767.94 154,766.42 154.5,766.21 155,767.82 155.5,767.45 156,766.56 156.5,766.32 157,766.98 157.5,767.79 158,766.9 158.5,767.5 159,767.28 159.5,768.19 160,767.38 160.5,768.18 161,766.67 161.5,766.56 162,767.72 162.5,768.02 163,767.44 163.5,767.69 164,767.72 164.5,766.78 165,766.56 165.5,767.66 166,767.36 166.5,767.32 167,767.44 167.5,769.53 168,768.33 168.5,766.49 169,767.89 169.5,767.17 170,765.67 170.5,769.32 171,766.33 171.5,767.6 172,768.73 172.5,766.54 173,767.6 173.5,768.54 174,767.09 174.5,767.46 175,768.19 175.5,767.4 176,767.33 176.5,766.81 177,766.93 177.5,766.84 178,766.53 178.5,768.99 179,766.74 179.5,766.59 180,768.84 180.5,767.18 181,767.81 181.5,766.19 182,768.15 182.5,768.13 183,767.69 183.5,766.12 184,764.61 184.5,766.24 185,763.92 185.5,764.38 186,763.08 186.5,763.75 187,764.72 187.5,762.61 188,766.32 188.5,765.38 189,765.74 189.5,765.17 190,764.73 190.5,765.16 191,767.45 191.5,766.47 192,767.19 192.5,766.07 193,767.44 193.5,767.27 194,767.23 194.5,766.04 195,767.96 195.5,766.86 196,768.32 196.5,766.12 197,767.55 197.5,765.49 198,767.71 198.5,768.77 199,767.09 199.5,767.54 200,769.4 200.5,767.49 201,767.76 201.5,767.94 202,766.42 202.5,767.09 203,769.02 203.5,766.63 204,767.62 204.5,767.18 205,768.17 205.5,767.32 206,766.35 206.5,767.78 207,767.32 207.5,768.07 208,767.86 208.5,768.42 209,767.33 209.5,768.02 210,767.72 210.5,767.95 211,766.39 211.5,768.39 212,768.02 212.5,766.85 213,767.39 213.5,766.74 214,768.14 214.5,768 215,767.53 215.5,767.3 216,768.41 216.5,768.92 217,768.98 217.5,767.11 218,768.06 218.5,767.06 219,766.26 219.5,766.99 220,763.92 220.5,764.11 221,762.99 221.5,763.82 222,764.3 222.5,764.75 223,767.03 223.5,765.28 224,764.65 224.5,764.66 225,767.95 225.5,766.77 226,766.84 226.5,768.15 227,769.05 227.5,768.48 228,767.54 228.5,766.24 229,766.6 229.5,767.69 230,765.68 230.5,768.51 231,765.75 231.5,766.02 232,764.26 232.5,765.64 233,765.14 233.5,763.25 234,762.31 234.5,762.14 235,761.88 235.5,760.74 236,760.3 236.5,762.58 237,762.06 237.5,762.88 238,761.13 238.5,762.35 239,763.18 239.5,764.51 240,765.9 240.5,767.22 241,766.5 241.5,766.21 242,765.25 242.5,768.43 243,767.68 243.5,769.51 244,767.95 244.5,768.57 245,768.42 245.5,768.03 246,767.93 246.5,769.6 247,768.95 247.5,768.31 248,769.37 248.5,769.83 249,768.69 249.5,769.79 250,768.87 250.5,768.22 251,768.9 251.5,768.66 252,770.13 252.5,768.09 253,766.78 253.5,766.5 254,768.13 254.5,767.14 255,768.88 255.5,768.32 256,766.98 256.5,767.95 257,767.27 257.5,768.09 258,767.02 258.5,767.12 259,767.14 259.5,766.87 260,768.52 260.5,768.22 261,768.34 261.5,766.74 262,768.62 262.5,768.78 263,765.74 263.5,766.83 264,768.78 264.5,767.93 265,768.03 265.5,767.66 266,768.42 266.5,767.67 267,766.17 267.5,768.73 268,767.54 268.5,767.68 269,766.6 269.5,767.14 270,769.08 270.5,766.08 271,768.63 271.5,767.53 272,768.3 272.5,767.91 273,767.75 273.5,766.66 274,767.98 274.5,768.76 275,765.81 275.5,767.18 276,767.03 276.5,767.02 277,768.04 277.5,767.89 278,767.53 278.5,769.02 279,766.73 279.5,766.31 280,767.26 280.5,767.98 281,766.83 281.5,767.8 282,767.15 282.5,767.14 283,768.78 283.5,766.22 284,768.06 284.5,767.19 285,768.04 285.5,767.33 286,767.96 286.5,766.27 287,767.09 287.5,767.85 288,767.52 288.5,766.89 289,766.29 289.5,767.18 290,768.83 290.5,767.64 291,767.02 291.5,768.76 292,766.57 292.5,768.58 293,767.41 293.5,766.52 294,766.53 294.5,766.3 295,766.62 295.5,767.47 296,767.67 296.5,768.46 297,768.67" fill="none" stroke="#ff0035" stroke-width="5.2" stroke-linejoin="round" stroke-linecap="round"/>
<polyline points="86,852.43 86.5,852.51 87,852.29 87.5,851.88 88,852.55 88.5,852.11 89,852.49 89.5,851.87 90,851.76 90.5,852.02 91,852.44 91.5,851.6 92,851.88 92.5,852.49 93,852.95 93.5,852.13 94,851.92 94.5,852.06 95,851.97 95.5,852.65 96,852.42 96.5,851.93 97,852.45 97.5,851.55 98,852.21 98.5,852.2 99,852.13 99.5,851.92 100,852.02 100.5,851.64 101,852.34 101.5,851.91 102,852.37 102.5,852.45 103,851.99 103.5,851.84 104,852.22 104.5,852.4 105,851.8 105.5,852.18 106,851.9 106.5,852.64 107,852.31 107.5,851.72 108,852.03 108.5,852.22 109,852.05 109.5,852.22 110,852.32 110.5,852.26 111,852.07 111.5,852.63 112,852.46 112.5,852.11 113,852.16 113.5,852 114,851.77 114.5,852.1 115,852.21 115.5,852.09 116,851.91 116.5,851.28 117,851.67 117.5,852.45 118,851.64 118.5,852.37 119,852.41 119.5,852.17 120,852.2 120.5,852.44 121,852.18 121.5,852.18 122,852.46 122.5,852.18 123,852.79 123.5,851.86 124,852.08 124.5,852.11 125,852.25 125.5,852 126,852.77 126.5,852.39 127,851.64 127.5,852.19 128,852.4 128.5,852.55 129,852.32 129.5,851.96 130,852.44 130.5,851.8 131,852.23 131.5,851.84 132,852.6 132.5,852.41 133,852.84 133.5,852.11 134,852.17 134.5,852.05 135,852.54 135.5,851.87 136,852.41 136.5,852.09 137,852.41 137.5,852.27 138,851.96 138.5,852.07 139,851.68 139.5,851.92 140,852.02 140.5,852.5 141,852.07 141.5,852.27 142,852.13 142.5,851.81 143,852.37 143.5,852.77 144,852.38 144.5,852.56 145,852.38 145.5,852.49 146,852.81 146.5,851.7 147,852 147.5,851.75 148,852.21 148.5,852.09 149,851.98 149.5,852.34 150,852.76 150.5,852.61 151,852.73 151.5,852.24 152,852.33 152.5,852.63 153,852.5 153.5,852.5 154,852.11 154.5,852.07 155,852.01 155.5,852.58 156,851.95 156.5,852.26 157,852.28 157.5,852.17 158,852.12 158.5,852.33 159,851.99 159.5,852.24 160,852.59 160.5,852.04 161,852.55 161.5,852.58 162,852.74 162.5,851.94 163,852.71 163.5,852.51 164,852.64 164.5,852.5 165,852.16 165.5,852.49 166,852.26 166.5,852.06 167,852.03 167.5,852.07 168,852.16 168.5,851.73 169,852.31 169.5,851.79 170,852.39 170.5,852.62 171,852.57 171.5,852.69 172,852.67 172.5,852.91 173,852.18 173.5,851.95 174,852.16 174.5,851.91 175,852.61 175.5,851.51 176,852.21 176.5,852.49 177,852.39 177.5,852.47 178,851.89 178.5,852.08 179,852.17 179.5,852.35 180,852.38 180.5,852.65 181,851.84 181.5,852.3 182,852.88 182.5,852.6 183,852.28 183.5,852.47 184,852.14 184.5,852.61 185,852.05 185.5,852.46 186,852.28 186.5,851.99 187,852.27 187.5,852.19 188,852.01 188.5,852.26 189,851.95 189.5,852.55 190,852.36 190.5,852.51 191,852.41 191.5,852.3 192,851.81 192.5,852.12 193,852.22 193.5,852.06 194,852.19 194.5,852.1 195,852.07 195.5,851.95 196,852.07 196.5,851.89 197,852.51 197.5,852.29 198,852.36 198.5,852.45 199,852.1 199.5,852.53 200,851.69 200.5,852.03 201,852.22 201.5,852.71 202,852.54 202.5,852.46 203,852.44 203.5,852.05 204,852.17 204.5,852.02 205,852.24 205.5,851.85 206,852.12 206.5,852.07 207,852.35 207.5,852.03 208,852.32 208.5,852.36 209,852.36 209.5,852.44 210,851.94 210.5,852.24 211,852.17 211.5,852.53 212,852.08 212.5,852.3 213,851.82 213.5,852.12 214,852 214.5,852.2 215,852.03 215.5,852.19 216,852.27 216.5,851.92 217,852.43 217.5,852.04 218,852.81 218.5,852.54 219,852.4 219.5,852.24 220,852.6 220.5,852.3 221,851.74 221.5,852.41 222,852.29 222.5,851.5 223,851.7 223.5,852.6 224,852.31 224.5,852 225,851.69 225.5,851.9 226,852.66 226.5,851.54 227,852.36 227.5,852.91 228,852.25 228.5,851.94 229,852.36 229.5,852.39 230,852.32 230.5,852.15 231,851.75 231.5,852.36 232,852.42 232.5,852.33 233,852.35 233.5,852.25 234,852.46 234.5,853.22 235,852.04 235.5,852.29 236,851.87 236.5,851.68 237,852.21 237.5,852.62 238,851.93 238.5,852.07 239,852.05 239.5,851.79 240,851.79 240.5,852.23 241,852.07 241.5,852.14 242,851.93 242.5,852.61 243,852.86 243.5,851.97 244,851.76 244.5,852.57 245,852.62 245.5,852.8 246,851.95 246.5,852.18 247,851.63 247.5,852.33 248,851.82 248.5,851.69 249,852.42 249.5,852.33 250,851.61 250.5,851.97 251,852.93 251.5,851.49 252,852.06 252.5,852.79 253,852.72 253.5,852.25 254,851.98 254.5,852.31 255,852.01 255.5,852.31 256,852.51 256.5,852.23 257,852.55 257.5,852.58 258,851.95 258.5,852.13 259,851.91 259.5,852.31 260,851.68 260.5,851.91 261,851.55 261.5,852.34 262,851.93 262.5,852.57 263,852.43 263.5,852.34 264,851.97 264.5,851.73 265,851.88 265.5,852.21 266,852.17 266.5,852.15 267,852.2 267.5,852.62 268,852.55 268.5,851.84 269,852.4 269.5,851.94 270,852.27 270.5,852.26 271,852.47 271.5,852.43 272,851.85 272.5,852.17 273,852.32 273.5,852.14 274,852.66 274.5,851.79 275,852.36 275.5,852.25 276,852.06 276.5,852.16 277,852.12 277.5,852.28 278,852.03 278.5,852.1 279,852.95 279.5,852.06 280,852.36 280.5,852.52 281,851.94 281.5,852.44 282,852.01 282.5,851.45 283,852.2 283.5,851.3 284,852.16 284.5,852.41 285,852.72 285.5,852.39 286,852.51 286.5,852.39 287,852.2 287.5,852.51 288,852.09 288.5,852.28 289,851.99 289.5,852.12 290,852.31 290.5,851.64 291,852.01 291.5,851.91 292,852.17 292.5,852.77 293,851.92 293.5,852.14 294,852.1 294.5,851.97 295,851.97 295.5,852.47 296,852.13 296.5,851.98 297,851.84" fill="none" stroke="#6488ff" stroke-width="7" stroke-linejoin="round" stroke-linecap="round"/>
<path d="M147.8 853V788" stroke="#6488ff" stroke-width="4.6" stroke-linecap="round" fill="none"/>
<path d="M150 853V823" stroke="#6488ff" stroke-width="2.2" stroke-linecap="round" fill="none"/>
<path d="M166.5 853V796M116 853V844M137.5 853V839M206.5 853V831M252.5 853V838M278.5 853V835" stroke="#6488ff" stroke-width="1.2" fill="none"/>
<circle cx="166.5" cy="796" r="2.3" fill="#6488ff"/>
<circle cx="116" cy="844" r="2.3" fill="#6488ff"/>
<circle cx="137.5" cy="839" r="2.3" fill="#6488ff"/>
<circle cx="206.5" cy="831" r="2.3" fill="#6488ff"/>
<circle cx="252.5" cy="838" r="2.3" fill="#6488ff"/>
<circle cx="278.5" cy="835" r="2.3" fill="#6488ff"/>
<circle cx="166.5" cy="846" r="2.3" fill="#6488ff"/>
<circle cx="206.5" cy="846" r="2.3" fill="#6488ff"/>
<circle cx="252.5" cy="848" r="2.3" fill="#6488ff"/>
<circle cx="278.5" cy="848" r="2.3" fill="#6488ff"/>
<circle cx="105" cy="849" r="2.3" fill="#6488ff"/>
<circle cx="235" cy="850" r="2.3" fill="#6488ff"/>
<circle cx="265" cy="850" r="2.3" fill="#6488ff"/>
</g>
<text x="77" y="603.5" textLength="31.79" lengthAdjust="spacingAndGlyphs" text-anchor="end">1.0E-3</text>
<text x="77" y="642" textLength="31.79" lengthAdjust="spacingAndGlyphs" text-anchor="end">1.0E-4</text>
<text x="77" y="680.5" textLength="31.79" lengthAdjust="spacingAndGlyphs" text-anchor="end">1.0E-5</text>
<text x="77" y="719" textLength="31.79" lengthAdjust="spacingAndGlyphs" text-anchor="end">1.0E-6</text>
<text x="77" y="757.5" textLength="31.79" lengthAdjust="spacingAndGlyphs" text-anchor="end">1.0E-7</text>
<text x="77" y="796" textLength="31.79" lengthAdjust="spacingAndGlyphs" text-anchor="end">1.0E-8</text>
<text x="77" y="834.5" textLength="31.79" lengthAdjust="spacingAndGlyphs" text-anchor="end">1.0E-9</text>
<text x="77" y="873" textLength="37.79" lengthAdjust="spacingAndGlyphs" text-anchor="end">1.0E-10</text>
<path d="M79 599.5h5M79 637.5h5M79 676.5h5M79 714.5h5M79 753.5h5M79 791.5h5M79 830.5h5M79 868.5h5" stroke="#000" stroke-width="1" fill="none"/>
<path d="M86.5 871v5M131.5 871v5M177.5 871v5M223.5 871v5M268.5 871v5M296.5 871v5" stroke="#000" stroke-width="1" fill="none"/>
<text x="85.8" y="888.5" textLength="26.5" lengthAdjust="spacingAndGlyphs" text-anchor="middle">00:00</text>
<text x="131.3" y="888.5" textLength="26.5" lengthAdjust="spacingAndGlyphs" text-anchor="middle">02:00</text>
<text x="177" y="888.5" textLength="26.5" lengthAdjust="spacingAndGlyphs" text-anchor="middle">04:00</text>
<text x="222.8" y="888.5" textLength="26.5" lengthAdjust="spacingAndGlyphs" text-anchor="middle">06:00</text>
<text x="268.6" y="888.5" textLength="26.5" lengthAdjust="spacingAndGlyphs" text-anchor="middle">08:00</text>
<text x="296.2" y="888.5" textLength="26.5" lengthAdjust="spacingAndGlyphs" text-anchor="middle">09:13</text>
<text x="190.7" y="905" textLength="24" lengthAdjust="spacingAndGlyphs">Time</text>
<g transform="rotate(-90 32 732.5)">
<text x="32" y="732.5" textLength="83" lengthAdjust="spacingAndGlyphs" text-anchor="middle">Pressure (mbar)</text>
</g>
<rect x="397" y="586" width="220" height="269" fill="#000"/>
<path d="M404.5 586V855M410.5 586V855M416.5 586V855M422.5 586V855M427.5 586V855M433.5 586V855M439.5 586V855M445.5 586V855M457.5 586V855M463.5 586V855M469.5 586V855M475.5 586V855M481.5 586V855M487.5 586V855M493.5 586V855M499.5 586V855M511.5 586V855M517.5 586V855M523.5 586V855M529.5 586V855M535.5 586V855M541.5 586V855M546.5 586V855M552.5 586V855M564.5 586V855M570.5 586V855M576.5 586V855M582.5 586V855M588.5 586V855M594.5 586V855M600.5 586V855M606.5 586V855M397 593.5H617M397 600.5H617M397 607.5H617M397 613.5H617M397 627.5H617M397 633.5H617M397 640.5H617M397 647.5H617M397 660.5H617M397 667.5H617M397 674.5H617M397 680.5H617M397 694.5H617M397 700.5H617M397 707.5H617M397 714.5H617M397 727.5H617M397 734.5H617M397 740.5H617M397 747.5H617M397 760.5H617M397 767.5H617M397 774.5H617M397 780.5H617M397 794.5H617M397 800.5H617M397 807.5H617M397 814.5H617M397 827.5H617M397 834.5H617M397 841.5H617M397 847.5H617" stroke="#5d5700" stroke-width="1" fill="none"/>
<path d="M451.5 586V855M505.5 586V855M558.5 586V855M612.5 586V855M397 620.5H617M397 654.5H617M397 687.5H617M397 720.5H617M397 754.5H617M397 787.5H617M397 821.5H617" stroke="#a6a200" stroke-width="1" fill="none"/>
<g clip-path="url(#c2)">
<polyline points="453.6,603.94 454.1,604.27 454.6,603.66 455.1,604.2 455.6,603.86 456.1,603.86 456.6,604.46 457.1,603.98 457.6,603.93 458.1,604.14 458.6,604.26 459.1,603.94 459.6,604.11 460.1,603.68 460.6,603.85 461.1,603.83 461.6,603.58 462.1,603.54 462.6,603.51 463.1,603.9 463.6,603.92 464.1,603.88 464.6,603.97 465.1,603.53 465.6,603.77 466.1,603.66 466.6,603.51 467.1,602.76 467.6,602.69 468.1,602.27 468.6,602.92 469.1,602.76 469.6,603.26 470.1,604.16 470.6,603.33 471.1,604.21 471.6,604.1 472.1,603.92 472.6,604.14 473.1,604.16 473.6,604.31 474.1,603.96 474.6,603.86 475.1,603.86 475.6,603.75 476.1,604.02 476.6,603.81 477.1,604.33 477.6,603.51 478.1,603.73 478.6,603.78 479.1,603.46 479.6,604.58 480.1,603.38 480.6,603.97 481.1,603.91 481.6,604.52 482.1,603.5 482.6,604.36 483.1,603.86 483.6,604.02 484.1,603.88 484.6,604.25 485.1,603.76 485.6,604.06 486.1,604.18 486.6,604.6 487.1,603.41 487.6,604.52 488.1,604.36 488.6,603.96 489.1,604.18 489.6,603.97 490.1,604.58 490.6,604.24 491.1,604.2 491.6,604.26 492.1,604.34 492.6,604.42 493.1,604.3 493.6,605.19 494.1,604.15 494.6,603.75 495.1,604.79 495.6,604.86 496.1,605.08 496.6,604.99 497.1,605.09 497.6,605.36 498.1,605.68 498.6,605.42 499.1,605.58 499.6,606.37 500.1,606.11 500.6,605.8 501.1,606.79 501.6,606.31 502.1,605.65 502.6,604.88 503.1,604.56 503.6,603.65 504.1,603.44 504.6,603.73 505.1,604.65 505.6,605.82 506.1,605.92 506.6,605.95 507.1,606.68 507.6,606.56 508.1,606.8 508.6,606.9 509.1,606.49 509.6,606.42 510.1,606.28 510.6,605.72 511.1,605.91 511.6,605.86 512.1,605.47 512.6,605.51 513.1,605.8 513.6,605.97 514.1,606.2 514.6,606.44 515.1,606.38 515.6,606.52 516.1,606.21 516.6,606.76 517.1,606.68 517.6,606.35 518.1,606.04 518.6,606.68 519.1,607 519.6,606.49 520.1,606.57 520.6,606.55 521.1,606.89 521.6,606.46 522.1,607 522.6,606.64 523.1,606.99 523.6,606.75 524.1,606.68 524.6,606.33 525.1,606.56 525.6,606.68 526.1,606.95 526.6,606.83 527.1,606.58 527.6,606.89 528.1,607.06 528.6,606.74 529.1,606.67 529.6,606.69 530.1,607.03 530.6,606.96 531.1,606.55 531.6,606.91 532.1,606.66 532.6,606.53 533.1,606.93 533.6,606.48 534.1,605.52 534.6,605.12 535.1,604.74 535.6,604.29 536.1,604.74 536.6,605.56 537.1,605.49 537.6,606.54 538.1,606.92 538.6,606.97 539.1,606.5 539.6,606.98 540.1,606.65 540.6,607.04 541.1,607.04 541.6,606.92 542.1,606.63 542.6,606.67 543.1,607.06 543.6,606.55 544.1,606.93 544.6,606.91 545.1,606.63 545.6,607.27 546.1,606.42 546.6,606.67 547.1,605.13 547.6,604.75 548.1,605.56 548.6,605.63 549.1,605.7 549.6,606.11 550.1,605.85 550.6,606.34 551.1,606.28 551.6,606.52 552.1,606.82 552.6,606.58 553.1,606.65 553.6,606.34 554.1,606.4 554.6,606.54 555.1,606.4 555.6,606.72 556.1,606 556.6,606.66 557.1,605.75 557.6,606.2 558.1,605.57 558.6,606.14 559.1,605.6 559.6,605.56 560.1,605.54 560.6,605.04 561.1,604.81 561.6,604.42 562.1,605.22 562.6,604.57 563.1,604.48 563.6,604.52 564.1,604.96 564.6,603.79 565.1,604.19 565.6,603.78 566.1,603.7 566.6,602.58 567.1,602.43 567.6,602.33 568.1,602.34 568.6,602.55 569.1,602.25 569.6,602.91 570.1,603.16 570.6,602.98 571.1,603.03 571.6,603.67 572.1,603.53 572.6,603.42 573.1,603.79 573.6,603.16 574.1,603.55 574.6,603.34 575.1,603.17 575.6,603.1 576.1,602.75 576.6,602.56 577.1,602.5 577.6,603.09 578.1,602.7 578.6,603.32 579.1,603.39 579.6,603.23 580.1,603.59 580.6,603.14 581.1,603.7 581.6,603.15 582.1,603.23 582.6,603.46 583.1,603.6 583.6,603.61 584.1,603.6 584.6,603.27 585.1,603.01 585.6,603.3 586.1,602.98 586.6,602.23 587.1,602.29 587.6,601.69 588.1,601.26 588.6,601.87 589.1,601.82 589.6,602.4 590.1,603.09 590.6,602.74 591.1,603.28 591.6,602.92 592.1,603.52 592.6,603.12 593.1,603.37 593.6,602.91 594.1,603.23 594.6,603.6 595.1,603.47 595.6,602.83 596.1,603.6 596.6,603.6 597.1,603.24 597.6,603.74 598.1,603 598.6,603.17 599.1,603.29 599.6,602.99 600.1,602.57 600.6,601.57 601.1,601.29 601.6,602.11 602.1,601.99 602.6,602.77 603.1,602.75 603.6,603.58 604.1,603.59 604.6,603.55 605.1,603.41 605.6,603.43 606.1,603.33 606.6,603.52 607.1,603.46 607.6,603.45 608.1,603.07 608.6,603.5 609.1,602.79 609.6,602.9 610.1,602.83 610.6,602.34 611.1,602.36 611.6,603.44 612.1,603.18 612.6,603.42 613.1,603.38 613.6,603.51 614.1,603.14 614.6,603.45 615.1,603.36 615.6,603.49 616.1,602.84 616.6,603.73" fill="none" stroke="#00fcc8" stroke-width="9" stroke-linejoin="round" stroke-linecap="round"/>
<polyline points="453.6,617.99 454.1,618 454.6,618.51 455.1,617.68 455.6,618.29 456.1,617.7 456.6,618.64 457.1,618.39 457.6,618.72 458.1,618.2 458.6,618.45 459.1,618.27 459.6,618.14 460.1,618.39 460.6,618 461.1,618.26 461.6,618.55 462.1,618.38 462.6,618.25 463.1,618.98 463.6,618.38 464.1,618.2 464.6,618.4 465.1,618.16 465.6,618.09 466.1,617.89 466.6,618.27 467.1,617.4 467.6,617.26 468.1,617.42 468.6,618.02 469.1,617.71 469.6,617.88 470.1,618.94 470.6,617.94 471.1,618.29 471.6,618.59 472.1,619.05 472.6,618.15 473.1,617.74 473.6,618.6 474.1,618.27 474.6,618.31 475.1,618.55 475.6,618.49 476.1,618.51 476.6,618.31 477.1,618.8 477.6,618.86 478.1,618.45 478.6,618.32 479.1,618.65 479.6,618.58 480.1,618.16 480.6,618.32 481.1,618.75 481.6,618.43 482.1,618.37 482.6,618.52 483.1,618.46 483.6,618.47 484.1,617.93 484.6,618.96 485.1,618.53 485.6,618.23 486.1,618.75 486.6,618.57 487.1,618.49 487.6,618.78 488.1,619.12 488.6,618.65 489.1,618.94 489.6,619.1 490.1,618.23 490.6,618.44 491.1,618.87 491.6,618.25 492.1,618.73 492.6,619.23 493.1,619.23 493.6,619.18 494.1,618.56 494.6,619.82 495.1,619.38 495.6,619.51 496.1,619.51 496.6,618.96 497.1,619.13 497.6,619.33 498.1,620.35 498.6,619.72 499.1,620.02 499.6,620.16 500.1,620.52 500.6,620.62 501.1,620.62 501.6,620.14 502.1,619.34 502.6,619.65 503.1,618.95 503.6,618.63 504.1,618.11 504.6,618.33 505.1,619.3 505.6,619.47 506.1,620.15 506.6,620.47 507.1,620.97 507.6,621.53 508.1,621.17 508.6,621.28 509.1,621 509.6,620.94 510.1,620.57 510.6,620.36 511.1,619.45 511.6,619.54 512.1,619.46 512.6,620.21 513.1,620.46 513.6,620.91 514.1,621.26 514.6,620.87 515.1,621.31 515.6,621.59 516.1,621.05 516.6,621.37 517.1,621.02 517.6,620.62 518.1,621.11 518.6,620.85 519.1,621.12 519.6,620.97 520.1,621.19 520.6,620.51 521.1,621.69 521.6,621.5 522.1,621.02 522.6,620.87 523.1,621.13 523.6,621.33 524.1,621.26 524.6,621.26 525.1,620.6 525.6,620.84 526.1,621.54 526.6,621.23 527.1,620.75 527.6,620.93 528.1,620.78 528.6,620.9 529.1,621.52 529.6,621.13 530.1,621.52 530.6,621.26 531.1,620.78 531.6,621.03 532.1,621.84 532.6,620.92 533.1,620.68 533.6,621 534.1,620.15 534.6,619.5 535.1,619.41 535.6,618.36 536.1,619.29 536.6,619.47 537.1,619.99 537.6,620.62 538.1,621.44 538.6,621.19 539.1,620.75 539.6,620.98 540.1,621.73 540.6,621.58 541.1,620.96 541.6,621.95 542.1,621.14 542.6,620.89 543.1,621.18 543.6,621.47 544.1,621.65 544.6,621.46 545.1,620.99 545.6,620.84 546.1,620.38 546.6,620.45 547.1,619.92 547.6,619.85 548.1,619.33 548.6,619.71 549.1,619.93 549.6,620.18 550.1,620.44 550.6,620.63 551.1,620.63 551.6,621.14 552.1,621 552.6,620.59 553.1,621.1 553.6,621.02 554.1,621.34 554.6,620.85 555.1,620.82 555.6,620.57 556.1,620.68 556.6,620.68 557.1,620.47 557.6,620.23 558.1,620.35 558.6,620.1 559.1,620.03 559.6,619.58 560.1,619.79 560.6,619.33 561.1,619.26 561.6,619.44 562.1,619.88 562.6,619.45 563.1,619.04 563.6,618.87 564.1,619.09 564.6,619.07 565.1,618.87 565.6,618.24 566.1,618.01 566.6,617.39 567.1,616.86 567.6,616.25 568.1,616.23 568.6,615.89 569.1,616.55 569.6,617.42 570.1,617.33 570.6,617.92 571.1,617.46 571.6,617.75 572.1,617.97 572.6,617.56 573.1,617.65 573.6,618.55 574.1,617.61 574.6,617.53 575.1,617.43 575.6,617.38 576.1,617.09 576.6,617.16 577.1,617.05 577.6,616.83 578.1,617.08 578.6,617.03 579.1,617.19 579.6,617.51 580.1,617.98 580.6,617.81 581.1,618.01 581.6,618.05 582.1,617.72 582.6,618.37 583.1,617.61 583.6,617.58 584.1,617.63 584.6,618.05 585.1,617.64 585.6,617.34 586.1,617.42 586.6,617.22 587.1,616.38 587.6,615.96 588.1,616.23 588.6,616.43 589.1,616.86 589.6,616.82 590.1,617.46 590.6,617.68 591.1,617.15 591.6,618.04 592.1,617.74 592.6,617.62 593.1,618.37 593.6,617.77 594.1,617.52 594.6,617.72 595.1,617.9 595.6,617.97 596.1,617.73 596.6,617.5 597.1,617.55 597.6,617.51 598.1,617.4 598.6,617.59 599.1,617.24 599.6,617.04 600.1,616.37 600.6,616.03 601.1,616.14 601.6,616.3 602.1,617.12 602.6,616.95 603.1,617.57 603.6,617.67 604.1,617.39 604.6,618.01 605.1,617.86 605.6,617.21 606.1,617.99 606.6,618.08 607.1,617.56 607.6,618.21 608.1,617.63 608.6,617.04 609.1,617.27 609.6,616.8 610.1,616.47 610.6,616.37 611.1,617.3 611.6,617.28 612.1,617.87 612.6,617.91 613.1,617.7 613.6,617.72 614.1,618.38 614.6,618.37 615.1,618.1 615.6,617.79 616.1,617.61 616.6,617.79" fill="none" stroke="#ff0035" stroke-width="9" stroke-linejoin="round" stroke-linecap="round"/>
<polyline points="450,853.6 617,853.6" fill="none" stroke="#ffe600" stroke-width="3.2" stroke-linejoin="round" stroke-linecap="round" stroke-linecap="butt"/>
</g>
<text x="389" y="591.7" textLength="15" lengthAdjust="spacingAndGlyphs" text-anchor="end">7.0</text>
<text x="389" y="625.1" textLength="15" lengthAdjust="spacingAndGlyphs" text-anchor="end">6.0</text>
<text x="389" y="658.5" textLength="15" lengthAdjust="spacingAndGlyphs" text-anchor="end">5.0</text>
<text x="389" y="691.9" textLength="15" lengthAdjust="spacingAndGlyphs" text-anchor="end">4.0</text>
<text x="389" y="725.3" textLength="15" lengthAdjust="spacingAndGlyphs" text-anchor="end">3.0</text>
<text x="389" y="758.7" textLength="15" lengthAdjust="spacingAndGlyphs" text-anchor="end">2.0</text>
<text x="389" y="792.1" textLength="15" lengthAdjust="spacingAndGlyphs" text-anchor="end">1.0</text>
<text x="389" y="825.5" textLength="15" lengthAdjust="spacingAndGlyphs" text-anchor="end">0.0</text>
<text x="389" y="858.9" textLength="18.59" lengthAdjust="spacingAndGlyphs" text-anchor="end">-1.0</text>
<path d="M391 587.5h5M391 620.5h5M391 654.5h5M391 687.5h5M391 720.5h5M391 754.5h5M391 787.5h5M391 821.5h5M391 854.5h5" stroke="#000" stroke-width="1" fill="none"/>
<path d="M398.5 857v5M451.5 857v5M505.5 857v5M558.5 857v5M612.5 857v5M616.5 857v5" stroke="#000" stroke-width="1" fill="none"/>
<text x="397.8" y="874" textLength="26.5" lengthAdjust="spacingAndGlyphs" text-anchor="middle">21:00</text>
<text x="397.8" y="889" textLength="51" lengthAdjust="spacingAndGlyphs" text-anchor="middle">5/22/2023</text>
<text x="451" y="874" textLength="26.5" lengthAdjust="spacingAndGlyphs" text-anchor="middle">00:00</text>
<text x="451" y="889" textLength="51" lengthAdjust="spacingAndGlyphs" text-anchor="middle">5/23/2023</text>
<text x="504.6" y="874" textLength="26.5" lengthAdjust="spacingAndGlyphs" text-anchor="middle">03:00</text>
<text x="504.6" y="889" textLength="51" lengthAdjust="spacingAndGlyphs" text-anchor="middle">5/23/2023</text>
<text x="558" y="874" textLength="26.5" lengthAdjust="spacingAndGlyphs" text-anchor="middle">06:00</text>
<text x="558" y="889" textLength="51" lengthAdjust="spacingAndGlyphs" text-anchor="middle">5/23/2023</text>
<text x="615.8" y="874" textLength="26.5" lengthAdjust="spacingAndGlyphs" text-anchor="middle">09:13</text>
<text x="615.8" y="889" textLength="51" lengthAdjust="spacingAndGlyphs" text-anchor="middle">5/23/2023</text>
<text x="489.6" y="905.5" textLength="24.8" lengthAdjust="spacingAndGlyphs" text-anchor="middle">Time</text>
<g transform="rotate(-90 362 720.5)">
<text x="362" y="720.5" textLength="84" lengthAdjust="spacingAndGlyphs" text-anchor="middle">Temperature (K)</text>
</g>
<rect x="650" y="588" width="312" height="311.5" fill="#7e7e7e"/>
<rect x="650" y="588" width="311" height="310.5" fill="url(#c3f)"/>
<rect x="650" y="588" width="311" height="1.5" fill="#d6d6d6"/>
<rect x="738" y="598" width="180" height="245" fill="#000"/>
<path d="M742.5 598V843M747.5 598V843M752.5 598V843M757.5 598V843M762.5 598V843M767.5 598V843M772.5 598V843M777.5 598V843M786.5 598V843M791.5 598V843M796.5 598V843M801.5 598V843M806.5 598V843M811.5 598V843M816.5 598V843M821.5 598V843M831.5 598V843M836.5 598V843M841.5 598V843M845.5 598V843M850.5 598V843M855.5 598V843M860.5 598V843M865.5 598V843M875.5 598V843M880.5 598V843M885.5 598V843M890.5 598V843M895.5 598V843M900.5 598V843M905.5 598V843M909.5 598V843M738 604.5H918M738 609.5H918M738 614.5H918M738 620.5H918M738 631.5H918M738 636.5H918M738 641.5H918M738 647.5H918M738 658.5H918M738 663.5H918M738 669.5H918M738 674.5H918M738 685.5H918M738 690.5H918M738 696.5H918M738 701.5H918M738 712.5H918M738 717.5H918M738 723.5H918M738 728.5H918M738 739.5H918M738 744.5H918M738 750.5H918M738 755.5H918M738 766.5H918M738 771.5H918M738 777.5H918M738 782.5H918M738 793.5H918M738 798.5H918M738 804.5H918M738 809.5H918M738 820.5H918M738 826.5H918M738 831.5H918M738 836.5H918" stroke="#5d5700" stroke-width="1" fill="none"/>
<path d="M826.5 598V843M870.5 598V843M915.5 598V843M738 598.5H918M738 625.5H918M738 652.5H918M738 679.5H918M738 706.5H918M738 734.5H918M738 761.5H918M738 788.5H918M738 815.5H918" stroke="#a6a200" stroke-width="1" fill="none"/>
<g clip-path="url(#c3)">
<polygon points="782.3,737 784.3,736.89 786.3,736.77 788.3,736.66 790.3,736.55 792.3,736.44 794.3,736.32 796.3,736.21 798.3,736.1 800.3,735.92 802.3,735.42 804.3,734.92 806.3,734.42 808.3,733.92 810.3,733.42 812.3,733.15 814.3,734.15 816.3,735.15 818.3,736.15 820.3,737.15 822.3,738.9 824.3,744 826.3,744 828.3,744 830.3,744 832.3,744 834.3,744 836.3,744 838.3,744 840.3,744 842.3,744 844.3,744 846.3,743.91 848.3,743.78 850.3,743.65 852.3,743.51 854.3,743.38 856.3,743.25 858.3,743.11 860.3,742.97 862.3,742.77 864.3,742.57 866.3,742.37 868.3,742.17 870.3,741.2 872.3,735.87 874.3,733.92 876.3,733.81 878.3,733.69 880.3,733.57 882.3,733.45 884.3,733.34 886.3,733.22 888.3,733.1 890.3,732.96 892.3,732.69 894.3,732.43 896.3,732.16 898.3,731.89 900.3,731.63 902.3,731.36 904.3,731.09 906.3,731.4 908.3,732.02 910.3,732.63 912.3,733.25 914.3,733.86 916.3,734.48 918,735 918,763 916.3,762.61 914.3,762.15 912.3,761.68 910.3,761.22 908.3,760.76 906.3,760.3 904.3,760.09 902.3,760.36 900.3,760.63 898.3,760.89 896.3,761.16 894.3,761.43 892.3,761.69 890.3,761.96 888.3,762 886.3,762 884.3,762 882.3,762 880.3,762 878.3,762 876.3,762 874.3,762 872.3,767.95 870.3,774.95 868.3,776.17 866.3,776.37 864.3,776.57 862.3,776.77 860.3,776.97 858.3,777.11 856.3,777.25 854.3,777.38 852.3,777.51 850.3,777.65 848.3,777.78 846.3,777.91 844.3,777.93 842.3,777.72 840.3,777.51 838.3,777.29 836.3,777.08 834.3,776.87 832.3,776.66 830.3,776.45 828.3,776.24 826.3,776.03 824.3,770.9 822.3,764.9 820.3,763.51 818.3,762.94 816.3,762.37 814.3,762.14 812.3,762.54 810.3,762.94 808.3,763.34 806.3,763.74 804.3,764.14 802.3,764.54 800.3,764.94 798.3,764.81 796.3,764.58 794.3,764.36 792.3,764.13 790.3,763.9 788.3,763.68 786.3,763.45 784.3,763.23 782.3,763" fill="#6cff0a"/>
<polyline points="782.3,724.76 782.8,784.8 783.3,726.68 783.8,761.87 784.3,733.96 784.8,765.69 785.3,734.68 785.8,762.51 786.3,737.6 786.8,766.21 787.3,737.34 787.8,766.48 788.3,738.52 788.8,762.45 789.3,731.8 789.8,766.22 790.3,734.59 790.8,772.56 791.3,736.05 791.8,762.55 792.3,730.03 792.8,769.3 793.3,732.48 793.8,770.06 794.3,721.32 794.8,766.02 795.3,730.42 795.8,766.21 796.3,733.54 796.8,771.28 797.3,736.08 797.8,763.47 798.3,734.56 798.8,772.99 799.3,733.13 799.8,767.72 800.3,732.27 800.8,764.45 801.3,736.59 801.8,765.77 802.3,728.12 802.8,764.18 803.3,736.51 803.8,763.07 804.3,736.71 804.8,764.62 805.3,732 805.8,775.59 806.3,734.22 806.8,765.33 807.3,734.3 807.8,764.35 808.3,727.66 808.8,767.61 809.3,734.03 809.8,761.95 810.3,727 810.8,770.66 811.3,725.48 811.8,762.81 812.3,730.81 812.8,780.52 813.3,730.71 813.8,783.51 814.3,735.14 814.8,789.55 815.3,736.33 815.8,764.53 816.3,737.02 816.8,773.78 817.3,731.26 817.8,789.92 818.3,729.16 818.8,784.87 819.3,734.4 819.8,791.37 820.3,731.55 820.8,765.06 821.3,722.65 821.8,765.73 822.3,739.72 822.8,765.03 823.3,740.45 823.8,769.15 824.3,731.09 824.8,794.44 825.3,744.66 825.8,774.27 826.3,741.86 826.8,775.57 827.3,741.69 827.8,787.6 828.3,744.4 828.8,778.68 829.3,733.29 829.8,779.11 830.3,743.69 830.8,792.33 831.3,736.76 831.8,792.65 832.3,739.6 832.8,778.97 833.3,739.5 833.8,788.99 834.3,740.39 834.8,777.11 835.3,744.08 835.8,779.25 836.3,737.88 836.8,781.65 837.3,741.61 837.8,789.26 838.3,745.37 838.8,783.33 839.3,743.78 839.8,782.01 840.3,736.08 840.8,777.84 841.3,729.35 841.8,776.32 842.3,741.46 842.8,782.01 843.3,744.53 843.8,782.46 844.3,742.5 844.8,780.76 845.3,739.01 845.8,775.98 846.3,743.31 846.8,788.2 847.3,745.01 847.8,791.98 848.3,744.53 848.8,784.89 849.3,744.67 849.8,780.45 850.3,742.63 850.8,776.3 851.3,738.97 851.8,780.78 852.3,739.09 852.8,781.68 853.3,740.98 853.8,781.39 854.3,743.44 854.8,793.67 855.3,744.82 855.8,792.02 856.3,734.3 856.8,780.72 857.3,736.93 857.8,784.1 858.3,740 858.8,777.84 859.3,742.93 859.8,778.45 860.3,742.99 860.8,800.61 861.3,742.57 861.8,778.74 862.3,741.78 862.8,788.28 863.3,741.1 863.8,781.08 864.3,742.95 864.8,777.13 865.3,743.96 865.8,776.38 866.3,742.68 866.8,789.62 867.3,740.43 867.8,775.16 868.3,740.75 868.8,775.15 869.3,739.48 869.8,778.69 870.3,732.45 870.8,773.6 871.3,730.07 871.8,769.98 872.3,720.87 872.8,772.24 873.3,735.74 873.8,773.87 874.3,734.15 874.8,763.6 875.3,734.99 875.8,774.53 876.3,735.28 876.8,770.72 877.3,732.98 877.8,769.1 878.3,733.78 878.8,760.65 879.3,722.06 879.8,768.51 880.3,734.55 880.8,789.9 881.3,722.16 881.8,761.61 882.3,735.35 882.8,767.55 883.3,734.57 883.8,770.53 884.3,731.86 884.8,769.88 885.3,730.64 885.8,771.78 886.3,725.74 886.8,767.39 887.3,730.24 887.8,763.17 888.3,734.31 888.8,760.78 889.3,724.35 889.8,761.85 890.3,731.9 890.8,762.94 891.3,729.51 891.8,765.86 892.3,723.92 892.8,764.21 893.3,732.09 893.8,767.92 894.3,726.92 894.8,780.13 895.3,732.24 895.8,776.63 896.3,717.16 896.8,789.09 897.3,733.27 897.8,762.79 898.3,725.71 898.8,773.05 899.3,733.54 899.8,762.71 900.3,726.54 900.8,769.92 901.3,729.28 901.8,760.32 902.3,730.49 902.8,758.78 903.3,731.14 903.8,762.62 904.3,723.57 904.8,765.15 905.3,730.15 905.8,760.44 906.3,731.32 906.8,767.3 907.3,730.46 907.8,760.17 908.3,724.53 908.8,765.73 909.3,717.32 909.8,765.26 910.3,729.26 910.8,763.8 911.3,729.78 911.8,779.66 912.3,718.25 912.8,768.45 913.3,732.46 913.8,760.55 914.3,725.78 914.8,764.23 915.3,733.52 915.8,760.96 916.3,736.29 916.8,764.68 917.3,719.78 917.8,771.75" fill="none" stroke="#6cff0a" stroke-width="1.15" stroke-linejoin="round" stroke-linecap="round"/>
<path d="M797.2 755V802M805.6 755V796M792 755V784M827.3 755V807M833 755V795M870.7 755V810M851 755V797M842 755V800M884 755V789M897 755V786M909 755V788M915 755V785M878 755V790M862 755V796M818 755V780" stroke="#6cff0a" stroke-width="1.1" fill="none"/>
<path d="M786 750V722M790.5 750V725M803.5 750V719M811 750V721M835 750V731M848 750V733M866 750V730M880 750V720M893 750V718M901 750V720M913 750V716M908 750V722" stroke="#6cff0a" stroke-width="1.1" fill="none"/>
<polygon points="780.5,635 781.5,634.1 782.5,632.35 783.5,631.78 784.5,632.96 785.5,631.81 786.5,633.21 787.5,633.18 788.5,633.39 789.5,632.52 790.5,632.3 791.5,632.94 792.5,631.82 793.5,632.67 794.5,631.54 795.5,631.96 796.5,631.75 797.5,630.71 798.5,629.83 799.5,628.32 800.5,627.98 801.5,629.73 802.5,629.19 803.5,630.4 804.5,631.36 805.5,631.24 806.5,631.57 807.5,630.13 808.5,631.39 809.5,628.69 810.5,630.09 811.5,629.11 812.5,629.46 813.5,628.52 814.5,630.67 815.5,632.14 816.5,632.15 817.5,631.32 818.5,633.76 819.5,634.38 820.5,633.32 821.5,636.54 822.5,638.99 823.5,646 824.5,652.96 825.5,656.28 826.5,657.35 827.5,654.07 828.5,651.28 829.5,648.2 830.5,647.76 831.5,648.93 832.5,648.27 833.5,648.98 834.5,647.52 835.5,648.98 836.5,648.89 837.5,646.97 838.5,648.44 839.5,646.56 840.5,646.32 841.5,645.61 842.5,646.64 843.5,644.89 844.5,646.39 845.5,643.55 846.5,638.7 847.5,628.12 848.5,627.67 849.5,638.13 850.5,646.47 851.5,648.58 852.5,648.76 853.5,650.59 854.5,649.77 855.5,650.58 856.5,650.7 857.5,651.97 858.5,651.13 859.5,652.51 860.5,651 861.5,651.92 862.5,653.03 863.5,653.14 864.5,653.92 865.5,652.67 866.5,653.63 867.5,652.41 868.5,649.64 869.5,648.44 870.5,648.3 871.5,648.02 872.5,645.9 873.5,644.2 874.5,643.14 875.5,642.49 876.5,640.3 877.5,638.84 878.5,637.47 879.5,637.24 880.5,636.32 881.5,635.81 882.5,633.84 883.5,634.04 884.5,634.4 885.5,634.4 886.5,635.21 887.5,635.37 888.5,633.36 889.5,633.77 890.5,632.91 891.5,632.04 892.5,632.59 893.5,633.91 894.5,633.56 895.5,632.12 896.5,632.64 897.5,633.1 898.5,634.52 899.5,633.7 900.5,633.18 901.5,634.32 902.5,633.79 903.5,633.56 904.5,635.22 905.5,636.51 906.5,636.33 907.5,636.57 908.5,635.5 909.5,637.15 910.5,638.33 911.5,639.62 912.5,639.87 913.5,640.26 914.5,644.03 915.5,644.1 916.5,646.82 917.5,647.66 918,646 918,704 917.5,703.5 916.5,702.5 915.5,701.5 914.5,700.5 913.5,698.75 912.5,696.25 911.5,693.75 910.5,691.25 909.5,688.75 908.5,686.25 907.5,683.75 906.5,681.25 905.5,679.5 904.5,678.5 903.5,677.5 902.5,676.5 901.5,675.67 900.5,675 899.5,674.33 898.5,673.67 897.5,673 896.5,672.33 895.5,672.17 894.5,672.5 893.5,672.83 892.5,673.17 891.5,673.5 890.5,673.83 889.5,674.75 888.5,676.25 887.5,677.75 886.5,679.25 885.5,684.67 884.5,694 883.5,703.33 882.5,708.6 881.5,709.8 880.5,711 879.5,712.2 878.5,713.4 877.5,713.8 876.5,713.4 875.5,713 874.5,712.6 873.5,712.2 872.5,709 871.5,703 870.5,699 869.5,697 868.5,695 867.5,693 866.5,691 865.5,689.83 864.5,689.5 863.5,689.17 862.5,688.83 861.5,688.5 860.5,688.17 859.5,689 858.5,691 857.5,693 856.5,694.75 855.5,696.25 854.5,697.75 853.5,699.25 852.5,699.7 851.5,699.1 850.5,698.5 849.5,697.9 848.5,697.3 847.5,697.42 846.5,698.25 845.5,699.08 844.5,699.92 843.5,700.75 842.5,701.58 841.5,701.67 840.5,701 839.5,700.33 838.5,699.67 837.5,699 836.5,698.33 835.5,698.17 834.5,698.5 833.5,698.83 832.5,699.17 831.5,699.5 830.5,699.83 829.5,699.5 828.5,698.5 827.5,697.5 826.5,696.5 825.5,692 824.5,684 823.5,675.5 822.5,666.5 821.5,661.67 820.5,661 819.5,660.33 818.5,660.5 817.5,661.5 816.5,662.5 815.5,663.5 814.5,664.4 813.5,665.2 812.5,666 811.5,666.8 810.5,667.6 809.5,669 808.5,671 807.5,673 806.5,675 805.5,675.67 804.5,675 803.5,674.33 802.5,674.2 801.5,674.6 800.5,675 799.5,675.4 798.5,675.8 797.5,675.5 796.5,674.5 795.5,673.5 794.5,672.5 793.5,671.5 792.5,670.5 791.5,669.5 790.5,668.5 789.5,667 788.5,665 787.5,663 786.5,661.38 785.5,660.12 784.5,658.88 783.5,657.62 782.5,655.6 781.5,652.8 780.5,650" fill="#ff0035"/>
<path d="M785 655.5V665.79M791 665V673.72M794 668V682M797 671V677.96M800 671.2V685.2M806 672V678.66M809 666V677.51M812 662.4V675.09M815 660V674M821 657.33V668.92M830 696V726.1M833 695V716.83M836 694V708.12M839 696V724.52M842 698V720.48M845 695.5V705.86M848 693V700.32M851 694.8V701.72M854 694.5V730.08M857 690V720.12M860 684V696.92M863 685V698.16M866 686V701.28M869 692V719.43M872 702V718.68M875 708.8V719.37M878 710V717.3M881 706.4V714.43M884 694.67V720.04M887 674.5V698.19M893 669V676.45M896 668V704.49M899 670V703.44M902 672V688.62M905 675V689.6M908 681V690.23M911 688.5V697.26M914 696V716.49M917 699V722.93" stroke="#ff0035" stroke-width="2.2" fill="none"/>
<path d="M791.7 660V705M797.3 660V757M805.8 660V743M827.4 690V754M870 690V771M887 680V711M903 676V717M915.5 700V724M843 637V650M838.5 643V650M830 643V650" stroke="#ff0035" stroke-width="1.3" fill="none"/>
<g fill="#ff0035"><circle cx="780.5" cy="634.84" r="2.4"/><circle cx="783" cy="631.78" r="2.4"/><circle cx="784.92" cy="665.79" r="2.4"/><circle cx="784.9" cy="658.29" r="2.4"/><circle cx="785.5" cy="631.38" r="2.4"/><circle cx="788" cy="633.85" r="2.4"/><circle cx="790.5" cy="633.91" r="2.4"/><circle cx="790.68" cy="673.72" r="2.4"/><circle cx="793" cy="632.82" r="2.4"/><circle cx="794.36" cy="682" r="2.4"/><circle cx="794.34" cy="674.65" r="2.4"/><circle cx="795.5" cy="630.56" r="2.4"/><circle cx="797.36" cy="677.96" r="2.4"/><circle cx="798" cy="629.96" r="2.4"/><circle cx="799.92" cy="685.2" r="2.4"/><circle cx="800.08" cy="677.37" r="2.4"/><circle cx="800.5" cy="627.37" r="2.4"/><circle cx="803" cy="628.79" r="2.4"/><circle cx="805.5" cy="630.03" r="2.4"/><circle cx="805.88" cy="678.66" r="2.4"/><circle cx="808" cy="630.84" r="2.4"/><circle cx="808.82" cy="677.51" r="2.4"/><circle cx="809.09" cy="672.49" r="2.4"/><circle cx="810.5" cy="630.34" r="2.4"/><circle cx="811.8" cy="675.09" r="2.4"/><circle cx="812.1" cy="670.17" r="2.4"/><circle cx="813" cy="627.7" r="2.4"/><circle cx="815.15" cy="674" r="2.4"/><circle cx="815.39" cy="665.08" r="2.4"/><circle cx="815.5" cy="631.26" r="2.4"/><circle cx="818" cy="632.74" r="2.4"/><circle cx="820.5" cy="633.88" r="2.4"/><circle cx="820.64" cy="668.92" r="2.4"/><circle cx="820.85" cy="662.73" r="2.4"/><circle cx="823" cy="641.85" r="2.4"/><circle cx="825.5" cy="654.1" r="2.4"/><circle cx="828" cy="651.81" r="2.4"/><circle cx="829.88" cy="726.1" r="2.4"/><circle cx="830.14" cy="721.14" r="2.4"/><circle cx="830.06" cy="715.15" r="2.4"/><circle cx="829.96" cy="707.28" r="2.4"/><circle cx="830.1" cy="699.48" r="2.4"/><circle cx="830.5" cy="647.87" r="2.4"/><circle cx="833" cy="648.7" r="2.4"/><circle cx="832.83" cy="716.83" r="2.4"/><circle cx="833.22" cy="710.06" r="2.4"/><circle cx="833.18" cy="702.03" r="2.4"/><circle cx="835.5" cy="648.89" r="2.4"/><circle cx="836.11" cy="708.12" r="2.4"/><circle cx="835.98" cy="703.43" r="2.4"/><circle cx="838" cy="648.57" r="2.4"/><circle cx="838.95" cy="724.52" r="2.4"/><circle cx="839.31" cy="718.99" r="2.4"/><circle cx="838.75" cy="711.53" r="2.4"/><circle cx="839.3" cy="706.86" r="2.4"/><circle cx="838.69" cy="699.76" r="2.4"/><circle cx="840.5" cy="646.76" r="2.4"/><circle cx="842.25" cy="720.48" r="2.4"/><circle cx="842.02" cy="714.83" r="2.4"/><circle cx="842.09" cy="709.55" r="2.4"/><circle cx="842.23" cy="703.1" r="2.4"/><circle cx="843" cy="644.62" r="2.4"/><circle cx="844.6" cy="705.86" r="2.4"/><circle cx="845.37" cy="699.53" r="2.4"/><circle cx="845.5" cy="643.29" r="2.4"/><circle cx="848" cy="628" r="2.4"/><circle cx="847.79" cy="700.32" r="2.4"/><circle cx="850.5" cy="644.63" r="2.4"/><circle cx="850.67" cy="701.72" r="2.4"/><circle cx="853" cy="648.33" r="2.4"/><circle cx="853.63" cy="730.08" r="2.4"/><circle cx="853.77" cy="723.15" r="2.4"/><circle cx="853.6" cy="715.4" r="2.4"/><circle cx="854.19" cy="709.23" r="2.4"/><circle cx="853.93" cy="704.62" r="2.4"/><circle cx="853.99" cy="698.65" r="2.4"/><circle cx="855.5" cy="648.61" r="2.4"/><circle cx="856.82" cy="720.12" r="2.4"/><circle cx="856.71" cy="712.15" r="2.4"/><circle cx="856.75" cy="707.22" r="2.4"/><circle cx="856.8" cy="702.35" r="2.4"/><circle cx="856.67" cy="697.22" r="2.4"/><circle cx="858" cy="650.75" r="2.4"/><circle cx="860.01" cy="696.92" r="2.4"/><circle cx="859.64" cy="688.77" r="2.4"/><circle cx="860.5" cy="652" r="2.4"/><circle cx="863" cy="650.77" r="2.4"/><circle cx="863.1" cy="698.16" r="2.4"/><circle cx="862.6" cy="689.84" r="2.4"/><circle cx="865.5" cy="652.31" r="2.4"/><circle cx="865.63" cy="701.28" r="2.4"/><circle cx="866.37" cy="693.39" r="2.4"/><circle cx="868" cy="651.1" r="2.4"/><circle cx="869.28" cy="719.43" r="2.4"/><circle cx="868.99" cy="711.25" r="2.4"/><circle cx="869.24" cy="706.35" r="2.4"/><circle cx="869.16" cy="698.06" r="2.4"/><circle cx="870.5" cy="649.02" r="2.4"/><circle cx="871.85" cy="718.68" r="2.4"/><circle cx="871.78" cy="710.64" r="2.4"/><circle cx="872.32" cy="705.06" r="2.4"/><circle cx="873" cy="645.61" r="2.4"/><circle cx="875.06" cy="719.37" r="2.4"/><circle cx="875.32" cy="711.76" r="2.4"/><circle cx="875.5" cy="640.03" r="2.4"/><circle cx="878" cy="637.54" r="2.4"/><circle cx="877.94" cy="717.3" r="2.4"/><circle cx="877.67" cy="712.3" r="2.4"/><circle cx="880.5" cy="633.76" r="2.4"/><circle cx="880.91" cy="714.43" r="2.4"/><circle cx="881.24" cy="709.5" r="2.4"/><circle cx="883" cy="632.2" r="2.4"/><circle cx="883.74" cy="720.04" r="2.4"/><circle cx="883.65" cy="712.26" r="2.4"/><circle cx="884.35" cy="704.4" r="2.4"/><circle cx="883.73" cy="698.74" r="2.4"/><circle cx="885.5" cy="634.45" r="2.4"/><circle cx="886.73" cy="698.19" r="2.4"/><circle cx="887.19" cy="689.64" r="2.4"/><circle cx="887.38" cy="680.83" r="2.4"/><circle cx="888" cy="634.68" r="2.4"/><circle cx="890.5" cy="631.83" r="2.4"/><circle cx="893" cy="632.28" r="2.4"/><circle cx="892.77" cy="676.45" r="2.4"/><circle cx="895.5" cy="632.46" r="2.4"/><circle cx="896.06" cy="704.49" r="2.4"/><circle cx="896.18" cy="697.49" r="2.4"/><circle cx="896.24" cy="692.14" r="2.4"/><circle cx="896.25" cy="684.21" r="2.4"/><circle cx="896.03" cy="677.69" r="2.4"/><circle cx="895.97" cy="672.85" r="2.4"/><circle cx="898" cy="634.35" r="2.4"/><circle cx="898.87" cy="703.44" r="2.4"/><circle cx="899.28" cy="695.54" r="2.4"/><circle cx="899.14" cy="686.71" r="2.4"/><circle cx="899.3" cy="680.73" r="2.4"/><circle cx="899.05" cy="676.15" r="2.4"/><circle cx="900.5" cy="634.65" r="2.4"/><circle cx="901.76" cy="688.62" r="2.4"/><circle cx="901.63" cy="683.37" r="2.4"/><circle cx="902.23" cy="675.49" r="2.4"/><circle cx="903" cy="633.17" r="2.4"/><circle cx="904.76" cy="689.6" r="2.4"/><circle cx="904.87" cy="682.73" r="2.4"/><circle cx="905.5" cy="635.41" r="2.4"/><circle cx="908" cy="634.91" r="2.4"/><circle cx="908.05" cy="690.23" r="2.4"/><circle cx="910.5" cy="636.45" r="2.4"/><circle cx="910.82" cy="697.26" r="2.4"/><circle cx="910.99" cy="691.34" r="2.4"/><circle cx="913" cy="639.04" r="2.4"/><circle cx="913.95" cy="716.49" r="2.4"/><circle cx="914" cy="709.42" r="2.4"/><circle cx="913.74" cy="702.2" r="2.4"/><circle cx="915.5" cy="643.87" r="2.4"/><circle cx="917.08" cy="722.93" r="2.4"/><circle cx="917.39" cy="716.59" r="2.4"/><circle cx="916.61" cy="711.29" r="2.4"/><circle cx="917.15" cy="706.23" r="2.4"/><circle cx="917.19" cy="701.32" r="2.4"/><circle cx="918" cy="647.39" r="2.4"/><circle cx="791.7" cy="681" r="2.4"/><circle cx="791.7" cy="698" r="2.4"/><circle cx="791.7" cy="705" r="2.4"/><circle cx="797.3" cy="664" r="2.4"/><circle cx="797.3" cy="670" r="2.4"/><circle cx="797.3" cy="676" r="2.4"/><circle cx="797.3" cy="682" r="2.4"/><circle cx="797.3" cy="688" r="2.4"/><circle cx="797.3" cy="694" r="2.4"/><circle cx="797.3" cy="700" r="2.4"/><circle cx="797.3" cy="715" r="2.4"/><circle cx="797.3" cy="735" r="2.4"/><circle cx="797.3" cy="747" r="2.4"/><circle cx="797.3" cy="757" r="2.4"/><circle cx="805.8" cy="664" r="2.4"/><circle cx="805.8" cy="670" r="2.4"/><circle cx="805.8" cy="676" r="2.4"/><circle cx="805.8" cy="682" r="2.4"/><circle cx="805.8" cy="688" r="2.4"/><circle cx="805.8" cy="694" r="2.4"/><circle cx="805.8" cy="700" r="2.4"/><circle cx="805.8" cy="712" r="2.4"/><circle cx="805.8" cy="724" r="2.4"/><circle cx="805.8" cy="743" r="2.4"/><circle cx="827.4" cy="700" r="2.4"/><circle cx="827.4" cy="708" r="2.4"/><circle cx="827.4" cy="716" r="2.4"/><circle cx="827.4" cy="724" r="2.4"/><circle cx="827.4" cy="733" r="2.4"/><circle cx="827.4" cy="742" r="2.4"/><circle cx="827.4" cy="754" r="2.4"/><circle cx="870" cy="700" r="2.4"/><circle cx="870" cy="710" r="2.4"/><circle cx="870" cy="720" r="2.4"/><circle cx="870" cy="735" r="2.4"/><circle cx="870" cy="748" r="2.4"/><circle cx="870" cy="762" r="2.4"/><circle cx="870" cy="767" r="2.4"/><circle cx="870" cy="771" r="2.4"/><circle cx="887" cy="690" r="2.4"/><circle cx="887" cy="700" r="2.4"/><circle cx="887" cy="711" r="2.4"/><circle cx="903" cy="688" r="2.4"/><circle cx="903" cy="700" r="2.4"/><circle cx="903" cy="709" r="2.4"/><circle cx="903" cy="717" r="2.4"/><circle cx="915.5" cy="712" r="2.4"/><circle cx="915.5" cy="724" r="2.4"/><circle cx="843" cy="637" r="2.4"/><circle cx="838.5" cy="643" r="2.4"/><circle cx="830" cy="643" r="2.4"/></g>
</g>
<rect x="782" y="598" width="1" height="245" fill="#f2ee00"/>
<rect x="738" y="599" width="180" height="1" fill="#f2ee00"/>
<rect x="780" y="597" width="5" height="5" fill="#ff2a1e"/>
<path d="M780.5 597.5l4 4m0-4l-4 4" stroke="#fff000" stroke-width="1.2" fill="none"/>
<text x="729" y="603.2" textLength="24" lengthAdjust="spacingAndGlyphs" text-anchor="end">4500</text>
<text x="729" y="630.26" textLength="24" lengthAdjust="spacingAndGlyphs" text-anchor="end">4000</text>
<text x="729" y="657.32" textLength="24" lengthAdjust="spacingAndGlyphs" text-anchor="end">3500</text>
<text x="729" y="684.38" textLength="24" lengthAdjust="spacingAndGlyphs" text-anchor="end">3000</text>
<text x="729" y="711.44" textLength="24" lengthAdjust="spacingAndGlyphs" text-anchor="end">2500</text>
<text x="729" y="738.5" textLength="24" lengthAdjust="spacingAndGlyphs" text-anchor="end">2000</text>
<text x="729" y="765.56" textLength="24" lengthAdjust="spacingAndGlyphs" text-anchor="end">1500</text>
<text x="729" y="792.62" textLength="24" lengthAdjust="spacingAndGlyphs" text-anchor="end">1000</text>
<text x="729" y="819.68" textLength="18" lengthAdjust="spacingAndGlyphs" text-anchor="end">500</text>
<text x="729" y="846.74" textLength="6" lengthAdjust="spacingAndGlyphs" text-anchor="end">0</text>
<path d="M731 598.5h5M731 625.5h5M731 652.5h5M731 679.5h5M731 706.5h5M731 734.5h5M731 761.5h5M731 788.5h5M731 815.5h5M731 842.5h5" stroke="#000" stroke-width="1" fill="none"/>
<path d="M737.5 845v5M782.5 845v5M826.5 845v5M870.5 845v5M915.5 845v5M918.5 845v5" stroke="#000" stroke-width="1" fill="none"/>
<text x="737" y="862" textLength="26.5" lengthAdjust="spacingAndGlyphs" text-anchor="middle">21:00</text>
<text x="737" y="877" textLength="51" lengthAdjust="spacingAndGlyphs" text-anchor="middle">5/22/2023</text>
<text x="826" y="862" textLength="26.5" lengthAdjust="spacingAndGlyphs" text-anchor="middle">03:00</text>
<text x="826" y="877" textLength="51" lengthAdjust="spacingAndGlyphs" text-anchor="middle">5/23/2023</text>
<text x="917" y="862" textLength="26.5" lengthAdjust="spacingAndGlyphs" text-anchor="middle">09:13</text>
<text x="917" y="877" textLength="51" lengthAdjust="spacingAndGlyphs" text-anchor="middle">5/23/2023</text>
<text x="831" y="893.5" textLength="24" lengthAdjust="spacingAndGlyphs" text-anchor="middle">Time</text>
<g transform="rotate(-90 698 720.5)">
<text x="698" y="720.5" textLength="59.5" lengthAdjust="spacingAndGlyphs" text-anchor="middle">Counts/sec</text>
</g>
<polygon points="16.5,919 72,919 69,922 19.5,922 19.5,940 16.5,943" fill="#baad96"/>
<polygon points="72,943 16.5,943 19.5,940 69,940 69,922 72,919" fill="#efe4cf"/>
<rect x="19.5" y="922" width="49.5" height="18" fill="#d3d3d3"/>
<text x="21.5" y="936.5" textLength="29" lengthAdjust="spacingAndGlyphs">572.1</text>
<text x="75" y="930.7" textLength="81.5" lengthAdjust="spacingAndGlyphs">Cycle time [ms]</text>
<polygon points="73.5,934.5 148.5,934.5 146,937 76,937 76,943 73.5,945.5" fill="#baad96"/>
<polygon points="148.5,945.5 73.5,945.5 76,943 146,943 146,937 148.5,934.5" fill="#efe4cf"/>
<rect x="76" y="937" width="70" height="6" fill="url(#prog)"/>
<rect x="140" y="937" width="6" height="6.5" fill="url(#proge)"/>
<rect x="187.5" y="917.5" width="205" height="33" fill="#3a3a3a"/>
<rect x="188.5" y="918.5" width="203" height="31" fill="url(#stopb)"/>
<path d="M188.5 918.5h203l-5 4h-193zM188.5 918.5v31l5-4v-23z" fill="#e0e0e0" opacity=".75"/>
<path d="M391.5 949.5h-203l5-4h193zM391.5 949.5v-31l-5 4v23z" fill="#7a7a7a" opacity=".8"/>
<text x="223" y="941" textLength="133" lengthAdjust="spacingAndGlyphs" font-weight="bold" font-size="17" fill="#fa0014">STOP PROGRAM</text>
<polygon points="432,914 666,914 663,917 435,917 435,946 432,949" fill="#baad96"/>
<polygon points="666,949 432,949 435,946 663,946 663,917 666,914" fill="#efe4cf"/>
<rect x="435" y="917" width="228" height="29" fill="#80fc70"/>
<text x="500.5" y="940.5" textLength="94" lengthAdjust="spacingAndGlyphs" font-size="20">System OK</text>
<text x="695.5" y="938" textLength="116" lengthAdjust="spacingAndGlyphs">Last moderator grown</text>
<polygon points="815.5,922.5 945.5,922.5 942.5,925.5 818.5,925.5 818.5,942.5 815.5,945.5" fill="#baad96"/>
<polygon points="945.5,945.5 815.5,945.5 818.5,942.5 942.5,942.5 942.5,925.5 945.5,922.5" fill="#efe4cf"/>
<rect x="818.5" y="925.5" width="124" height="17" fill="#d3d3d3"/>
<text x="821.5" y="938" textLength="111" lengthAdjust="spacingAndGlyphs">Mon 22 May 2023 17:</text>
</svg>
</body></html>
